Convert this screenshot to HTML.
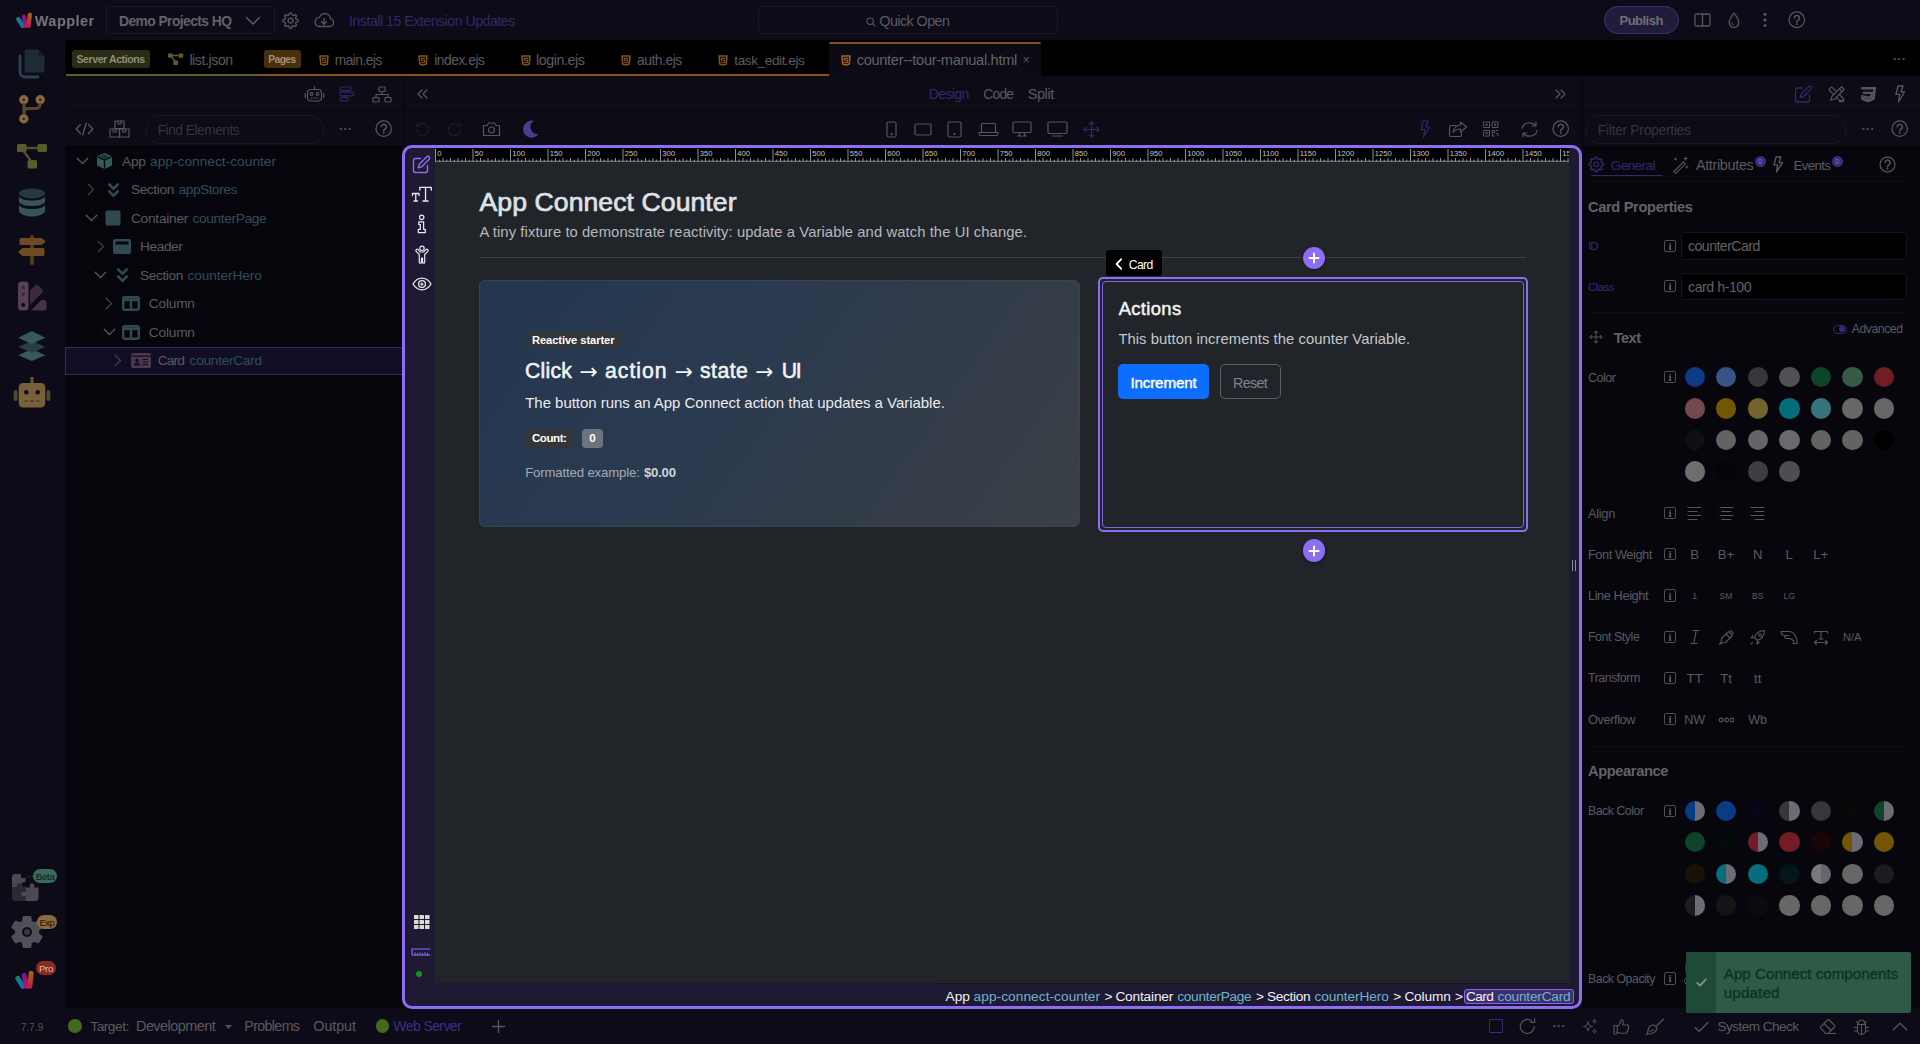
<!DOCTYPE html>
<html lang="en">
<head>
<meta charset="utf-8">
<title>Wappler - counter--tour-manual.html</title>
<style>
*{box-sizing:border-box;margin:0;padding:0}
html,body{width:1920px;height:1044px;overflow:hidden;background:#0d0b17;font-family:"Liberation Sans",sans-serif;color:#6e6d73;font-size:14px}
.abs{position:absolute}
.t{position:absolute;white-space:nowrap;line-height:1}
svg{position:absolute;overflow:visible}
.ic{fill:none;stroke:#66656c;stroke-width:1.4;stroke-linecap:round;stroke-linejoin:round}
.bg{position:absolute}
.layer{position:absolute;left:0;top:0;width:0;height:0}
/* SECTION-CSS */
</style>
</head>
<body>
<div class="bg" style="left:0;top:0;width:1920px;height:40px;background:#0d0b17"></div>
<div class="bg" style="left:0;top:40px;width:65.300px;height:968px;background:#0d0b17"></div>
<div class="bg" style="left:65.300px;top:40px;width:1854.700px;height:36px;background:#000"></div>
<div class="bg" style="left:65.300px;top:76px;width:337.700px;height:932px;background:#06050c"></div>
<div class="bg" style="left:1582px;top:76px;width:338px;height:932px;background:#07060d"></div>
<div class="bg" style="left:0;top:1008px;width:1920px;height:36px;background:#0d0b17"></div>
<div class="layer" id="topbar">
<svg class="" style="left:14.6px;top:11.7px;" width="17.5" height="16.5" viewBox="0 0 17.500 16.500"><defs><linearGradient id="wa1" gradientUnits="userSpaceOnUse" x1="3" y1="5" x2="7" y2="15"><stop offset="0" stop-color="#14907c"/><stop offset="1" stop-color="#1b6fc0"/></linearGradient><linearGradient id="wb1" gradientUnits="userSpaceOnUse" x1="8" y1="3" x2="11" y2="15"><stop offset="0" stop-color="#7d169c"/><stop offset="1" stop-color="#c8186c"/></linearGradient><linearGradient id="wc1" gradientUnits="userSpaceOnUse" x1="14.500" y1="1" x2="14" y2="15"><stop offset="0" stop-color="#b8700c"/><stop offset="1" stop-color="#cc1c50"/></linearGradient></defs><g fill="none" stroke-linecap="round" stroke-width="4.300" opacity=".92"><path d="M3.300 7.200L7.600 14" stroke="url(#wa1)"/><path d="M8.700 4.500L10.900 13.900" stroke="url(#wb1)"/><path d="M14.800 2.800L13.700 13.900" stroke="url(#wc1)"/></g></svg>
<span class="t" style="left:34.8px;top:14px;font-size:14.4px;color:#737277;letter-spacing:0.522px;font-weight:bold;">Wappler</span>
<div class="abs" style="left:106.0px;top:6.0px;width:168.5px;height:28.0px;border:1px solid #1b1925;border-radius:3px"></div>
<span class="t" style="left:119.0px;top:15px;font-size:13.85px;color:#636267;letter-spacing:-0.574px;font-weight:bold;">Demo Projects HQ</span>
<svg class="ic" style="left:244.5px;top:15.5px;stroke:#636267;stroke-width:1.3;" width="16" height="10" viewBox="0 0 16 10"><path d="M1.5 1.5 L8 8 L14.5 1.5"/></svg>
<svg class="ic" style="left:282.4px;top:11.7px;stroke:#57565c;stroke-width:1.3;" width="17.2" height="17.2" viewBox="0 0 17.2 17.2"><path d="M16.12 7.53 L16.12 9.67 L14.19 10.04 L13.57 11.54 L14.68 13.16 L13.16 14.68 L11.54 13.57 L10.04 14.19 L9.67 16.12 L7.53 16.12 L7.16 14.19 L5.66 13.57 L4.04 14.68 L2.52 13.16 L3.63 11.54 L3.01 10.04 L1.08 9.67 L1.08 7.53 L3.01 7.16 L3.63 5.66 L2.52 4.04 L4.04 2.52 L5.66 3.63 L7.16 3.01 L7.53 1.08 L9.67 1.08 L10.04 3.01 L11.54 3.63 L13.16 2.52 L14.68 4.04 L13.57 5.66 L14.19 7.16Z" stroke-linejoin="round"/><circle cx="8.6" cy="8.6" r="2.51"/></svg>
<svg class="ic" style="left:313.0px;top:12.0px;stroke:#57565c;stroke-width:1.3;" width="22" height="16" viewBox="0 0 22 16"><path d="M5.5 14.5h11a4 4 0 0 0 .9-7.9A5.6 5.6 0 0 0 6.6 5.3 4.7 4.7 0 0 0 5.5 14.5z"/><path d="M11 6.5v5.5M8.6 9.8L11 12.2l2.4-2.4"/></svg>
<span class="t" style="left:349.0px;top:14px;font-size:14.1px;color:#312a68;letter-spacing:-0.459px;">Install 15 Extension Updates</span>
<div class="abs" style="left:758.3px;top:6.0px;width:299.4px;height:28.0px;border:1px solid #1a1824;border-radius:3px"></div>
<svg class="ic" style="left:866.0px;top:16.5px;stroke:#57565c;stroke-width:1.1;" width="10" height="10" viewBox="0 0 10 10"><circle cx="4.2" cy="4.2" r="3.2"/><path d="M6.6 6.6L9.2 9.2"/></svg>
<span class="t" style="left:879.3px;top:14px;font-size:14.4px;color:#5b5a60;letter-spacing:-0.592px;">Quick Open</span>
<div class="abs" style="left:1603.7px;top:6.4px;width:75.5px;height:27.8px;background:#221c3c;border:1.2px solid #3e3270;border-radius:14px"></div>
<span class="t" style="left:1619.5px;top:14px;font-size:13.05px;color:#706f75;letter-spacing:-0.539px;font-weight:bold;">Publish</span>
<svg class="ic" style="left:1693.8px;top:13.0px;stroke:#57565c;stroke-width:1.3;" width="17" height="14" viewBox="0 0 17 14"><rect x="1" y="1" width="15" height="12" rx="1.5"/><path d="M8.5 1v12"/></svg>
<svg class="ic" style="left:1727.8px;top:11.5px;stroke:#57565c;stroke-width:1.3;" width="12" height="17" viewBox="0 0 12 17"><path d="M6 1.2C6 1.2 1.2 7.2 1.2 10.6a4.8 4.8 0 0 0 9.6 0C10.8 7.2 6 1.2 6 1.2z"/><path d="M3.6 10.8a2.4 2.4 0 0 0 1.7 2.2" stroke-width="1"/></svg>
<svg class="ic" style="left:1763.3px;top:12.0px;stroke:#57565c;stroke-width:0;" width="4" height="16" viewBox="0 0 4 16"><circle cx="2" cy="2.400" r="1.450" fill="#5c5b61"/><circle cx="2" cy="8" r="1.450" fill="#5c5b61"/><circle cx="2" cy="13.600" r="1.450" fill="#5c5b61"/></svg>
<svg class="ic" style="left:1787.8px;top:11.2px;stroke:#57565c;stroke-width:1.25;" width="17.6" height="17.6" viewBox="0 0 17.6 17.6"><circle cx="8.8" cy="8.8" r="7.8"/><path d="M6.30 6.90a2.600 2.500 0 1 1 3.900 2.200c-1 .600-1.400 1-1.400 2.100" stroke-width="1.500"/><circle cx="8.8" cy="13.10" r="0.950" fill="#57565c" stroke="none"/></svg>
</div>
<div class="layer" id="sidebar">
<svg class="" style="left:18.3px;top:48.3px;" width="28" height="32" viewBox="0 0 28 32"><path d="M2 8v16a5 5 0 0 0 5 5h13" fill="none" stroke="#294450" stroke-width="2.800" stroke-linecap="round"/><path d="M9 1.5h11l6.5 6.5v14a2.5 2.5 0 0 1-2.5 2.5H9A2.5 2.5 0 0 1 6.5 22V4A2.5 2.5 0 0 1 9 1.5z" fill="#1f2b38"/><path d="M20 1.5v4.5a2 2 0 0 0 2 2h4.5z" fill="#161f2a"/></svg>
<svg class="" style="left:18.0px;top:94.0px;" width="28" height="30" viewBox="0 0 28 30"><g fill="none" stroke="#86683e" stroke-width="3.600"><circle cx="5.800" cy="5.800" r="2.900"/><circle cx="22.200" cy="5.800" r="2.900"/><circle cx="5.800" cy="24.800" r="2.900"/></g><path d="M6 9v12M22 9v1.5a4 4 0 0 1-4 4h-8a4 4 0 0 0-4 4" fill="none" stroke="#594630" stroke-width="3.200"/></svg>
<svg class="" style="left:17.0px;top:143.0px;" width="30" height="26" viewBox="0 0 30 26"><g fill="#5a5c2e"><rect x="0" y="1" width="9.5" height="8" rx="1.6"/><rect x="20.5" y="1" width="9.5" height="8" rx="1.6"/><rect x="10.5" y="17" width="9.5" height="8.5" rx="1.6"/></g><path d="M9 5h12M6.5 8l7.5 10" stroke="#505130" stroke-width="2.300" fill="none"/></svg>
<svg class="" style="left:18.0px;top:188.0px;" width="28" height="30" viewBox="0 0 28 30"><ellipse cx="14" cy="5.500" rx="13" ry="5" fill="#26393c"/><path d="M1 8.5c2 3 7 4 13 4s11-1 13-4v5.5c-2 3-7 4-13 4s-11-1-13-4z" fill="#36555a"/><path d="M1 17c2 3 7 4 13 4s11-1 13-4v6c-1 3.5-7 5.5-13 5.5S2 26.500 1 23z" fill="#36555a"/></svg>
<svg class="" style="left:17.0px;top:234.5px;" width="30" height="30" viewBox="0 0 30 30"><rect x="13.2" y="0" width="3.6" height="30" rx="1.6" fill="#5a3e1e"/><path d="M4 3h20.500l4.5 3.500-4.500 3.500H4a1.500 1.500 0 0 1-1.500-1.500v-4A1.500 1.500 0 0 1 4 3z" fill="#6e4b24"/><path d="M26 13H5.500L1 17 5.500 21H26a1.500 1.500 0 0 0 1.500-1.500v-5A1.500 1.500 0 0 0 26 13z" fill="#6e4b24"/></svg>
<svg class="" style="left:17.0px;top:281.0px;" width="30" height="30" viewBox="0 0 30 30"><rect x="1" y="0.5" width="10.5" height="29" rx="3.5" fill="#574058"/><circle cx="6.2" cy="24" r="2" fill="#0e0c18"/><rect x="4.6" y="5" width="3.2" height="3.2" fill="#3c2838"/><rect x="4.6" y="11.500" width="3.2" height="3.2" fill="#3c2838"/><path d="M13 9.500l5-5a2.500 2.500 0 0 1 3.500 0l3.800 3.800a2.500 2.500 0 0 1 0 3.500L13 24z" fill="#3a2a3a"/><path d="M14 29.500L24.500 19H27a2.500 2.500 0 0 1 2.500 2.500V27a2.500 2.500 0 0 1-2.500 2.500z" fill="#4a3148"/></svg>
<svg class="" style="left:16.2px;top:329.5px;" width="31.5" height="32" viewBox="0 0 30 33"><path d="M15 19.500L1 26l14 6 14-6z" fill="#38595a"/><path d="M15 11L1 17.500l14 6 14-6z" fill="#263f40"/><path d="M15 1L1 8l14 6.500L29 8z" fill="#38595a"/></svg>
<svg class="" style="left:13.0px;top:376.5px;" width="38" height="32" viewBox="0 0 38 32"><rect x="17.700" y="0" width="2.600" height="6.500" fill="#6a5434"/><circle cx="19" cy="1.600" r="1.600" fill="#6a5434"/><rect x="0.700" y="13" width="3.800" height="11" rx="1.900" fill="#574630"/><rect x="33.500" y="13" width="3.800" height="11" rx="1.900" fill="#574630"/><rect x="5.700" y="6" width="26.600" height="24.500" rx="4.500" fill="#77603a"/><circle cx="13.300" cy="15.300" r="2.300" fill="#0e0c18"/><circle cx="24.700" cy="15.300" r="2.300" fill="#0e0c18"/><path d="M11.500 24h3.500M17.200 24h3.600M23 24h3.500" stroke="#564430" stroke-width="1.800"/></svg>
<svg class="" style="left:11.8px;top:874.1px;" width="26.5" height="27" viewBox="0 0 26.500 27"><path d="M0 3a3 3 0 0 1 3-3h6.200c-1 2.800.300 4.200 2 4.200s3-1.400 2-4.200H13.500v8.500c-2.800-1-4.200.300-4.200 2s1.400 3 4.200 2V13.500H0z" fill="#4b4a50"/><path d="M0 13.500h5c-1-2.800.300-4.200 2-4.200s3 1.400 2 4.200h4.500v4.500c2.800-1 4.200.300 4.200 2s-1.400 3-4.200 2V27H3a3 3 0 0 1-3-3z" fill="#2b2a31"/><path d="M13.500 27v-5c-2.800 1-4.200-.300-4.200-2s1.400-3 4.200-2v-4.500H18c-1-2.800.300-4.200 2-4.200s3 1.400 2 4.200h4.500V24a3 3 0 0 1-3 3z" fill="#4b4a50" transform="translate(0 0)"/><path d="M16 2.500h7.500v7" fill="none" stroke="#2f2e35" stroke-width="1.600" stroke-dasharray="1.800 1.800"/></svg>
<div class="abs" style="left:32.9px;top:868.5px;width:24.5px;height:14.2px;background:#3a6a5c;border-radius:7px"></div>
<span class="t" style="left:35.7px;top:872px;font-size:9.8px;color:#0c1d18;letter-spacing:-0.286px;">Beta</span>
<svg class="" style="left:11.9px;top:917.2px;" width="30" height="30" viewBox="0 0 30 30"><path d="M17.93 29.51 L12.07 29.51 L11.66 25.27 L7.77 23.03 L3.90 24.79 L0.97 19.72 L4.44 17.25 L4.44 12.75 L0.97 10.28 L3.90 5.21 L7.77 6.97 L11.66 4.73 L12.07 0.49 L17.93 0.49 L18.34 4.73 L22.23 6.97 L26.10 5.21 L29.03 10.28 L25.56 12.75 L25.56 17.25 L29.03 19.72 L26.10 24.79 L22.23 23.03 L18.34 25.27Z" fill="#515056" stroke="#515056" stroke-width="3" stroke-linejoin="round"/><circle cx="15" cy="15" r="5" fill="#0e0c18"/><circle cx="15" cy="15" r="3" fill="#3b3a40"/></svg>
<div class="abs" style="left:36.8px;top:914.5px;width:20.6px;height:14.2px;background:#8a6a3f;border-radius:7px"></div>
<span class="t" style="left:39.6px;top:919px;font-size:9.35px;color:#1c150b;letter-spacing:-0.555px;">Exp</span>
<svg class="" style="left:13.5px;top:969.6px;" width="20.3" height="19.4" viewBox="0 0 17.500 16.500"><defs><linearGradient id="wa2" gradientUnits="userSpaceOnUse" x1="3" y1="5" x2="7" y2="15"><stop offset="0" stop-color="#14907c"/><stop offset="1" stop-color="#1b6fc0"/></linearGradient><linearGradient id="wb2" gradientUnits="userSpaceOnUse" x1="8" y1="3" x2="11" y2="15"><stop offset="0" stop-color="#7d169c"/><stop offset="1" stop-color="#c8186c"/></linearGradient><linearGradient id="wc2" gradientUnits="userSpaceOnUse" x1="14.500" y1="1" x2="14" y2="15"><stop offset="0" stop-color="#b8700c"/><stop offset="1" stop-color="#cc1c50"/></linearGradient></defs><g fill="none" stroke-linecap="round" stroke-width="4.300" opacity=".92"><path d="M3.300 7.200L7.600 14" stroke="url(#wa2)"/><path d="M8.700 4.500L10.900 13.900" stroke="url(#wb2)"/><path d="M14.800 2.800L13.700 13.900" stroke="url(#wc2)"/></g></svg>
<div class="abs" style="left:36.1px;top:961.3px;width:20.0px;height:14.2px;background:#8a2a22;border-radius:7px"></div>
<span class="t" style="left:38.9px;top:964px;font-size:9.8px;color:#d6b8b2;letter-spacing:-0.375px;">Pro</span>
</div>
<div class="layer" id="tabbar">
<div class="abs" style="left:66.0px;top:74.2px;width:191.0px;height:1.8px;background:#55602f"></div>
<div class="abs" style="left:257.0px;top:74.2px;width:572.5px;height:1.8px;background:#8a4f1f"></div>
<div class="abs" style="left:72.2px;top:49.8px;width:77.6px;height:18.2px;background:#2a2c17;border-radius:3px"></div>
<span class="t" style="left:76.4px;top:54px;font-size:10.55px;color:#8d8f74;letter-spacing:-0.406px;font-weight:bold;">Server Actions</span>
<svg class="" style="left:168.0px;top:53.3px;" width="15.2" height="12.35" viewBox="0 0 16 13"><g fill="#5a5c2a" stroke="none"><rect x="0" y="0.5" width="5" height="4.4" rx="0.8"/><rect x="11" y="0.5" width="5" height="4.4" rx="0.8"/><rect x="5.6" y="8" width="5" height="4.6" rx="0.8"/></g><path d="M5 2.7h6M3.6 3.6L7.6 9" stroke="#5a5c2a" stroke-width="1.5" fill="none"/></svg>
<span class="t" style="left:189.4px;top:53px;font-size:14.1px;color:#5b5a60;letter-spacing:-0.402px;">list.json</span>
<div class="abs" style="left:263.9px;top:49.8px;width:36.7px;height:18.2px;background:#48300f;border-radius:3px"></div>
<span class="t" style="left:268.3px;top:55px;font-size:10.2px;color:#a48e72;letter-spacing:-0.537px;font-weight:bold;">Pages</span>
<svg class="ic" style="left:318.5px;top:54.6px;stroke:#85551d;stroke-width:1.5;" width="10" height="11" viewBox="0 0 10 11"><path d="M1 .900h8l-.750 8.100L5 10.100 1.750 9z" stroke-width="1.500"/><path d="M6.900 3.400H3.200l.150 1.900H6.700l-.200 2L5 7.800l-1.500-.500" stroke-width="1.100"/></svg>
<span class="t" style="left:334.7px;top:54px;font-size:13.75px;color:#5b5a60;letter-spacing:-0.500px;">main.ejs</span>
<svg class="ic" style="left:418.3px;top:54.6px;stroke:#85551d;stroke-width:1.5;" width="10" height="11" viewBox="0 0 10 11"><path d="M1 .900h8l-.750 8.100L5 10.100 1.750 9z" stroke-width="1.500"/><path d="M6.900 3.400H3.200l.150 1.900H6.700l-.200 2L5 7.800l-1.500-.500" stroke-width="1.100"/></svg>
<span class="t" style="left:434.2px;top:54px;font-size:13.85px;color:#5b5a60;letter-spacing:-0.484px;">index.ejs</span>
<svg class="ic" style="left:520.6px;top:54.6px;stroke:#85551d;stroke-width:1.5;" width="10" height="11" viewBox="0 0 10 11"><path d="M1 .900h8l-.750 8.100L5 10.100 1.750 9z" stroke-width="1.500"/><path d="M6.900 3.400H3.200l.150 1.900H6.700l-.200 2L5 7.800l-1.500-.500" stroke-width="1.100"/></svg>
<span class="t" style="left:536.0px;top:53px;font-size:14.35px;color:#5b5a60;letter-spacing:-0.456px;">login.ejs</span>
<svg class="ic" style="left:621.0px;top:54.6px;stroke:#85551d;stroke-width:1.5;" width="10" height="11" viewBox="0 0 10 11"><path d="M1 .900h8l-.750 8.100L5 10.100 1.750 9z" stroke-width="1.500"/><path d="M6.900 3.400H3.200l.150 1.900H6.700l-.200 2L5 7.800l-1.500-.500" stroke-width="1.100"/></svg>
<span class="t" style="left:637.0px;top:54px;font-size:13.9px;color:#5b5a60;letter-spacing:-0.483px;">auth.ejs</span>
<svg class="ic" style="left:718.3px;top:54.6px;stroke:#85551d;stroke-width:1.5;" width="10" height="11" viewBox="0 0 10 11"><path d="M1 .900h8l-.750 8.100L5 10.100 1.750 9z" stroke-width="1.500"/><path d="M6.900 3.400H3.200l.150 1.900H6.700l-.200 2L5 7.800l-1.500-.500" stroke-width="1.100"/></svg>
<span class="t" style="left:734.3px;top:54px;font-size:13.65px;color:#5b5a60;letter-spacing:-0.432px;">task_edit.ejs</span>
<div class="abs" style="left:829.3px;top:42.0px;width:211.7px;height:34.0px;background:#0b0a15;border-top:2px solid #8a4f1f;border-radius:2px 2px 0 0"></div>
<svg class="ic" style="left:840.7px;top:54.6px;stroke:#a8651f;stroke-width:1.5;" width="10" height="11" viewBox="0 0 10 11"><path d="M1 .900h8l-.750 8.100L5 10.100 1.750 9z" stroke-width="1.500"/><path d="M6.900 3.400H3.200l.150 1.900H6.700l-.200 2L5 7.800l-1.500-.500" stroke-width="1.100"/></svg>
<span class="t" style="left:856.7px;top:53px;font-size:14.6px;color:#636267;letter-spacing:-0.306px;">counter--tour-manual.html</span>
<span class="t" style="left:1022.4px;top:54px;font-size:12.5px;color:#57565c;">×</span>
<span class="t" style="left:1893.0px;top:52px;font-size:13.0px;color:#504f56;font-weight:bold;">···</span>
</div>
<div class="layer" id="leftpanel">
<div class="abs" style="left:65.3px;top:76.0px;width:337.7px;height:35.0px;background:#0c0b16;border-bottom:1px solid #07060d"></div>
<div class="abs" style="left:65.3px;top:111.0px;width:337.7px;height:35.0px;background:#0c0b16;border-bottom:1px solid #08070e"></div>
<svg class="ic" style="left:304.2px;top:85.0px;stroke:#57565c;stroke-width:1.2;" width="21" height="18" viewBox="0 0 21 18"><rect x="3.500" y="4.500" width="14" height="11.500" rx="3.500"/><path d="M10.500 4.500V1.500M1.200 8.500v4M19.800 8.500v4M7 13h1.200M9.900 13h1.200M12.800 13H14"/><circle cx="7.500" cy="9" r="1.300"/><circle cx="13.500" cy="9" r="1.300"/></svg>
<svg class="ic" style="left:339.2px;top:86.0px;stroke:#312a68;stroke-width:1.2;" width="16" height="16" viewBox="0 0 16 16"><rect x="1" y="1" width="11" height="3.600" rx="1.800"/><rect x="1" y="6.200" width="14" height="3.600" rx="1.800"/><rect x="1" y="11.400" width="8" height="3.600" rx="1.800"/></svg>
<svg class="ic" style="left:371.6px;top:85.5px;stroke:#57565c;stroke-width:1.2;" width="20" height="17" viewBox="0 0 20 17"><rect x="7" y="1" width="6" height="4.500" rx="0.800"/><rect x="1" y="11.500" width="6" height="4.500" rx="0.800"/><rect x="13" y="11.500" width="6" height="4.500" rx="0.800"/><path d="M10 5.500v3M4 11.500v-3h12v3"/></svg>
<svg class="ic" style="left:75.2px;top:122.0px;stroke:#57565c;stroke-width:1.3;" width="19" height="14" viewBox="0 0 19 14"><path d="M5.500 2.500L1.200 7l4.300 4.500M13.500 2.500L17.800 7l-4.300 4.500M11.300 1L7.700 13"/></svg>
<svg class="ic" style="left:108.5px;top:120.0px;stroke:#57565c;stroke-width:1.2;" width="21" height="18" viewBox="0 0 21 18"><rect x="6" y="1" width="9" height="7.500"/><rect x="1" y="9" width="9.500" height="8"/><rect x="10.500" y="9" width="9.500" height="8"/><path d="M9 1v3h3V1M4.200 9v3h3V9M13.700 9v3h3V9"/></svg>
<div class="abs" style="left:144.6px;top:114.8px;width:179.2px;height:28.8px;border:1px solid #1a1825;border-radius:15px;background:#0c0b16"></div>
<span class="t" style="left:157.7px;top:124px;font-size:13.8px;color:#35343c;letter-spacing:-0.518px;">Find Elements</span>
<span class="t" style="left:339.0px;top:122px;font-size:13.0px;color:#504f56;font-weight:bold;">···</span>
<svg class="ic" style="left:375.0px;top:120.3px;stroke:#57565c;stroke-width:1.25;" width="17.4" height="17.4" viewBox="0 0 17.4 17.4"><circle cx="8.7" cy="8.7" r="7.7"/><path d="M6.20 6.80a2.600 2.500 0 1 1 3.900 2.200c-1 .600-1.400 1-1.400 2.100" stroke-width="1.500"/><circle cx="8.7" cy="13.00" r="0.950" fill="#57565c" stroke="none"/></svg>
<div class="abs" style="left:65.3px;top:346.5px;width:337.7px;height:28.3px;background:#100d24;border:1px solid #33296c"></div>
<svg class="ic" style="left:76.1px;top:157.0px;stroke:#57565c;stroke-width:1.3;" width="13" height="8" viewBox="0 0 13 8"><path d="M1.200 1.200L6.500 6.500 11.800 1.200"/></svg>
<svg class="" style="left:95.5px;top:152.0px;" width="17" height="18" viewBox="0 0 17 18"><path d="M8.500 1L1 4.500v9L8.500 17l7.500-3.500v-9z" fill="#2f5d5a"/><path d="M1.500 4.800L8.500 8l7-3.200M8.500 8v8.500" stroke="#06050c" stroke-width="1.300" fill="none"/><path d="M8.500 2.500L4 4.600 8.500 6.700 13 4.600z" fill="#06050c" opacity=".55"/></svg>
<span class="t" style="left:122.0px;top:155px;font-size:13.7px;color:#5b5a60;letter-spacing:-0.190px;">App</span>
<span class="t" style="left:150.0px;top:155px;font-size:13.7px;color:#2e4f5a;letter-spacing:0.029px;">app-connect-counter</span>
<svg class="ic" style="left:87.0px;top:183.1px;stroke:#403f46;stroke-width:1.3;" width="8" height="13" viewBox="0 0 8 13"><path d="M1.200 1.200L6.500 6.500 1.200 11.800"/></svg>
<svg class="" style="left:106.9px;top:181.6px;" width="13" height="16" viewBox="0 0 13 16"><path d="M1.500 1.800L6.500 6.600l5-4.800M1.500 8.800L6.500 13.600l5-4.800" fill="none" stroke="#314a52" stroke-width="2.600" stroke-linejoin="miter"/></svg>
<span class="t" style="left:130.9px;top:183px;font-size:13.7px;color:#5b5a60;letter-spacing:-0.383px;">Section</span>
<span class="t" style="left:178.6px;top:183px;font-size:13.7px;color:#2e4f5a;letter-spacing:-0.470px;">appStores</span>
<svg class="ic" style="left:84.5px;top:214.0px;stroke:#57565c;stroke-width:1.3;" width="13" height="8" viewBox="0 0 13 8"><path d="M1.200 1.200L6.500 6.500 11.800 1.200"/></svg>
<svg class="" style="left:105.4px;top:210.0px;" width="16" height="16" viewBox="0 0 16 16"><rect x="0.500" y="0.500" width="15" height="15" rx="1.800" fill="#314a52"/></svg>
<span class="t" style="left:130.9px;top:212px;font-size:13.7px;color:#5b5a60;letter-spacing:-0.226px;">Container</span>
<span class="t" style="left:192.5px;top:212px;font-size:13.7px;color:#2e4f5a;letter-spacing:-0.340px;">counterPage</span>
<svg class="ic" style="left:96.6px;top:240.2px;stroke:#403f46;stroke-width:1.3;" width="8" height="13" viewBox="0 0 8 13"><path d="M1.200 1.200L6.500 6.500 1.200 11.800"/></svg>
<svg class="" style="left:113.0px;top:239.2px;" width="18" height="15" viewBox="0 0 18 15"><rect x="0" y="0" width="18" height="15" rx="2" fill="#314a52"/><rect x="2.500" y="2.500" width="13" height="3" fill="#06050c"/></svg>
<span class="t" style="left:140.0px;top:240px;font-size:13.7px;color:#5b5a60;letter-spacing:-0.408px;">Header</span>
<svg class="ic" style="left:94.1px;top:271.0px;stroke:#57565c;stroke-width:1.3;" width="13" height="8" viewBox="0 0 13 8"><path d="M1.200 1.200L6.500 6.500 11.800 1.200"/></svg>
<svg class="" style="left:115.5px;top:267.0px;" width="13" height="16" viewBox="0 0 13 16"><path d="M1.500 1.800L6.500 6.600l5-4.800M1.500 8.800L6.500 13.600l5-4.800" fill="none" stroke="#314a52" stroke-width="2.600" stroke-linejoin="miter"/></svg>
<span class="t" style="left:140.0px;top:269px;font-size:13.7px;color:#5b5a60;letter-spacing:-0.383px;">Section</span>
<span class="t" style="left:187.4px;top:269px;font-size:13.7px;color:#2e4f5a;letter-spacing:-0.080px;">counterHero</span>
<svg class="ic" style="left:105.4px;top:297.2px;stroke:#403f46;stroke-width:1.3;" width="8" height="13" viewBox="0 0 8 13"><path d="M1.200 1.200L6.500 6.500 1.200 11.800"/></svg>
<svg class="" style="left:122.0px;top:296.2px;" width="18" height="15" viewBox="0 0 18 15"><rect x="1.200" y="1.200" width="15.600" height="12.600" rx="1.500" fill="none" stroke="#314a52" stroke-width="2.400"/><path d="M1 3.800h16" stroke="#314a52" stroke-width="2.800"/><path d="M9 3v11" stroke="#314a52" stroke-width="2.400"/></svg>
<span class="t" style="left:148.8px;top:297px;font-size:13.7px;color:#5b5a60;letter-spacing:-0.202px;">Column</span>
<svg class="ic" style="left:102.9px;top:328.0px;stroke:#57565c;stroke-width:1.3;" width="13" height="8" viewBox="0 0 13 8"><path d="M1.200 1.200L6.500 6.500 11.800 1.200"/></svg>
<svg class="" style="left:122.0px;top:324.5px;" width="18" height="15" viewBox="0 0 18 15"><rect x="1.200" y="1.200" width="15.600" height="12.600" rx="1.500" fill="none" stroke="#314a52" stroke-width="2.400"/><path d="M1 3.800h16" stroke="#314a52" stroke-width="2.800"/><path d="M9 3v11" stroke="#314a52" stroke-width="2.400"/></svg>
<span class="t" style="left:148.8px;top:326px;font-size:13.7px;color:#5b5a60;letter-spacing:-0.202px;">Column</span>
<svg class="ic" style="left:114.0px;top:354.2px;stroke:#403f46;stroke-width:1.3;" width="8" height="13" viewBox="0 0 8 13"><path d="M1.200 1.200L6.500 6.500 1.200 11.800"/></svg>
<svg class="" style="left:130.5px;top:353.2px;" width="20" height="15" viewBox="0 0 20 15"><rect x="0" y="0" width="20" height="15" rx="2" fill="#4d374d"/><rect x="0" y="2.500" width="20" height="1.200" fill="#100d24"/><circle cx="6" cy="7.500" r="1.700" fill="#100d24"/><path d="M3 12.500a3 3 0 0 1 6 0z" fill="#100d24"/><path d="M11.500 6.500h5.500M11.500 9h5.500M11.500 11.500h5.500" stroke="#100d24" stroke-width="1.100"/></svg>
<span class="t" style="left:157.7px;top:354px;font-size:13.7px;color:#5b5a60;letter-spacing:-0.799px;">Card</span>
<span class="t" style="left:189.6px;top:354px;font-size:13.7px;color:#2e4f5a;letter-spacing:-0.270px;">counterCard</span>
</div>
<div class="layer" id="rightpanel">
<div class="abs" style="left:1582.0px;top:76.0px;width:338.0px;height:35.0px;background:#0c0b16;border-bottom:1px solid #07060d"></div>
<div class="abs" style="left:1582.0px;top:111.0px;width:338.0px;height:35.0px;background:#0c0b16;border-bottom:1px solid #08070e"></div>
<div class="abs" style="left:1581.5px;top:76.0px;width:1.0px;height:70.0px;background:#06050b"></div>
<svg class="ic" style="left:1794.4px;top:85.0px;stroke:#312a68;stroke-width:1.300" width="19" height="18" viewBox="0 0 19 18"><path d="M8.500 3H3.500A2 2 0 0 0 1.500 5v10a2 2 0 0 0 2 2h10a2 2 0 0 0 2-2v-5"/><path d="M14.800 1.600a1.700 1.700 0 0 1 2.400 2.400L9.500 11.700l-3.200.800.800-3.200z"/></svg>
<svg class="ic" style="left:1827.1px;top:84.5px;stroke:#57565c;stroke-width:1.2;" width="19" height="19" viewBox="0 0 19 19"><g transform="rotate(45 9.500 9.500)"><path d="M7.600 0.500h3.800v13.500l-1.900 3.500-1.900-3.500z"/><path d="M7.600 3.500h3.800"/></g><g transform="rotate(-45 9.500 9.500)"><path d="M7.500 6.800V1.500a1 1 0 0 1 1-1h2a1 1 0 0 1 1 1v5.300M11.500 12.200v5.300a1 1 0 0 1-1 1h-2a1 1 0 0 1-1-1v-5.300"/></g><path d="M12.500 16.500c1.200-1.400 2.800-1.400 4 0"/></svg>
<svg class="ic" style="left:1858.6px;top:85.5px;stroke:#57565c;stroke-width:2;" width="18" height="17" viewBox="0 0 18 17"><path d="M3.300 2.200h12.400l-1.300 10.600-5.400 2.200-5.400-2.200-.300-2.600" stroke-width="2.600" stroke-linejoin="miter"/><path d="M4.600 6.800h8.200l-.400 3.800-3.400 1.300-3.200-1.200" stroke-width="2.300" stroke-linejoin="miter"/></svg>
<svg class="ic" style="left:1893.8px;top:85.0px;stroke:#57565c;stroke-width:1.4;" width="12" height="18" viewBox="0 0 12 18"><path d="M4 1h5L7 7.0h3.500L4.500 17l1.200-7.6H2z"/></svg>
<div class="abs" style="left:1585.0px;top:114.8px;width:261.7px;height:28.8px;border:1px solid #1a1825;border-radius:15px;background:#0c0b16"></div>
<span class="t" style="left:1597.8px;top:123px;font-size:14.0px;color:#35343c;letter-spacing:-0.351px;">Filter Properties</span>
<span class="t" style="left:1861.5px;top:122px;font-size:13.0px;color:#504f56;font-weight:bold;">···</span>
<svg class="ic" style="left:1891.1px;top:120.3px;stroke:#57565c;stroke-width:1.25;" width="17.4" height="17.4" viewBox="0 0 17.4 17.4"><circle cx="8.7" cy="8.7" r="7.7"/><path d="M6.20 6.80a2.600 2.500 0 1 1 3.900 2.200c-1 .600-1.400 1-1.400 2.100" stroke-width="1.500"/><circle cx="8.7" cy="13.00" r="0.950" fill="#57565c" stroke="none"/></svg>
<svg class="ic" style="left:1587.7px;top:155.7px;stroke:#312a68;stroke-width:1.3;" width="16.6" height="16.6" viewBox="0 0 16.6 16.6"><path d="M15.53 7.27 L15.53 9.33 L13.67 9.68 L13.08 11.12 L14.14 12.68 L12.68 14.14 L11.12 13.08 L9.68 13.67 L9.33 15.53 L7.27 15.53 L6.92 13.67 L5.48 13.08 L3.92 14.14 L2.46 12.68 L3.52 11.12 L2.93 9.68 L1.07 9.33 L1.07 7.27 L2.93 6.92 L3.52 5.48 L2.46 3.92 L3.92 2.46 L5.48 3.52 L6.92 2.93 L7.27 1.07 L9.33 1.07 L9.68 2.93 L11.12 3.52 L12.68 2.46 L14.14 3.92 L13.08 5.48 L13.67 6.92Z" stroke-linejoin="round"/><circle cx="8.3" cy="8.3" r="2.41"/></svg>
<span class="t" style="left:1610.7px;top:159px;font-size:13.55px;color:#312a68;letter-spacing:-0.568px;">General</span>
<div class="abs" style="left:1590.7px;top:174.5px;width:72.3px;height:1.3px;background:#312a68"></div>
<svg class="ic" style="left:1671.5px;top:155.5px;stroke:#57565c;stroke-width:1.1;" width="17" height="17" viewBox="0 0 17 17"><path d="M2 15.500l9.500-9.500 1.800 1.800L3.800 17.300z"/><path d="M13.500 1v3M12 2.500h3M3.500 2v2M2.500 3h2M15 10v2M14 11h2"/></svg>
<span class="t" style="left:1695.9px;top:158px;font-size:14.4px;color:#5b5a60;letter-spacing:-0.324px;">Attributes</span>
<div class="abs" style="left:1754.5px;top:156.0px;width:11.0px;height:11.0px;background:#382e7e;border-radius:50%"></div>
<span class="t" style="left:1758.2px;top:159px;font-size:6.5px;color:#8a80c8;">0</span>
<svg class="ic" style="left:1772.0px;top:155.5px;stroke:#57565c;stroke-width:1.4;" width="12" height="17" viewBox="0 0 12 17"><path d="M4 1h5L7 6.6h3.500L4.500 16l1.200-7.1H2z"/></svg>
<span class="t" style="left:1793.4px;top:159px;font-size:13.2px;color:#5b5a60;letter-spacing:-0.549px;">Events</span>
<div class="abs" style="left:1831.5px;top:156.0px;width:11.0px;height:11.0px;background:#382e7e;border-radius:50%"></div>
<span class="t" style="left:1835.2px;top:159px;font-size:6.5px;color:#8a80c8;">0</span>
<svg class="ic" style="left:1879.1px;top:155.5px;stroke:#57565c;stroke-width:1.25;" width="17.0" height="17.0" viewBox="0 0 17.0 17.0"><circle cx="8.5" cy="8.5" r="7.5"/><path d="M6.00 6.60a2.600 2.500 0 1 1 3.900 2.200c-1 .600-1.400 1-1.400 2.100" stroke-width="1.500"/><circle cx="8.5" cy="12.80" r="0.950" fill="#57565c" stroke="none"/></svg>
<div class="abs" style="left:1588.0px;top:181.0px;width:318.0px;height:1.0px;background:#0f0e18"></div>
<span class="t" style="left:1588.0px;top:200px;font-size:14.6px;color:#636267;letter-spacing:-0.323px;font-weight:bold;">Card Properties</span>
<span class="t" style="left:1588.0px;top:241px;font-size:11.3px;color:#352d74;letter-spacing:-0.800px;">ID</span>
<div class="abs" style="left:1664.0px;top:239.5px;width:12.0px;height:12.3px;border:1.200px solid #504f56;border-radius:2px"></div><span class="t" style="left:1668.4px;top:242px;font-size:10.5px;color:#636267;font-weight:bold;font-family:'Liberation Serif',serif;">i</span>
<div class="abs" style="left:1681.0px;top:232.4px;width:226.0px;height:27.3px;background:#000;border:1px solid #15141c;border-radius:3px"></div>
<span class="t" style="left:1688.0px;top:239px;font-size:14.1px;color:#636267;letter-spacing:-0.529px;">counterCard</span>
<span class="t" style="left:1588.0px;top:282px;font-size:11.4px;color:#352d74;letter-spacing:-0.501px;">Class</span>
<div class="abs" style="left:1664.0px;top:280.0px;width:12.0px;height:12.3px;border:1.200px solid #504f56;border-radius:2px"></div><span class="t" style="left:1668.4px;top:282px;font-size:10.5px;color:#636267;font-weight:bold;font-family:'Liberation Serif',serif;">i</span>
<div class="abs" style="left:1681.0px;top:273.0px;width:226.0px;height:27.3px;background:#000;border:1px solid #15141c;border-radius:3px"></div>
<span class="t" style="left:1688.0px;top:280px;font-size:14.2px;color:#636267;letter-spacing:-0.466px;">card h-100</span>
<div class="abs" style="left:1588.0px;top:312.4px;width:318.0px;height:1.0px;background:#0f0e18"></div>
<div class="abs" style="left:1833.0px;top:324.5px;width:14.0px;height:9.3px;border:1.200px solid #352d74;border-radius:5px"></div>
<div class="abs" style="left:1838.8px;top:326.3px;width:6.0px;height:5.7px;background:#352d74;border-radius:3px"></div>
<span class="t" style="left:1851.7px;top:323px;font-size:12.2px;color:#5b5a60;letter-spacing:-0.423px;">Advanced</span>
<svg class="ic" style="left:1589.0px;top:330.0px;stroke:#55545b;stroke-width:1.0;" width="14" height="14" viewBox="0 0 14 14"><path d="M7 1v12M1 7h12M5.200 2.800L7 1l1.800 1.800M5.200 11.200L7 13l1.800-1.800M2.800 5.200L1 7l1.800 1.800M11.200 5.200L13 7l-1.800 1.800"/></svg>
<span class="t" style="left:1613.8px;top:331px;font-size:14.6px;color:#636267;letter-spacing:-0.578px;font-weight:bold;">Text</span>
<span class="t" style="left:1588.0px;top:372px;font-size:12.55px;color:#5b5a60;letter-spacing:-0.524px;">Color</span>
<div class="abs" style="left:1664.0px;top:370.7px;width:12.0px;height:12.3px;border:1.200px solid #504f56;border-radius:2px"></div><span class="t" style="left:1668.4px;top:373px;font-size:10.5px;color:#636267;font-weight:bold;font-family:'Liberation Serif',serif;">i</span>
<div class="abs" style="left:1684.6px;top:367.0px;width:20.4px;height:20.4px;background:#0b3b85;border-radius:50%"></div>
<div class="abs" style="left:1716.1px;top:367.0px;width:20.4px;height:20.4px;background:#375486;border-radius:50%"></div>
<div class="abs" style="left:1747.7px;top:367.0px;width:20.4px;height:20.4px;background:#36373b;border-radius:50%"></div>
<div class="abs" style="left:1779.2px;top:367.0px;width:20.4px;height:20.4px;background:#525255;border-radius:50%"></div>
<div class="abs" style="left:1810.7px;top:367.0px;width:20.4px;height:20.4px;background:#0e4529;border-radius:50%"></div>
<div class="abs" style="left:1842.2px;top:367.0px;width:20.4px;height:20.4px;background:#375a44;border-radius:50%"></div>
<div class="abs" style="left:1873.8px;top:367.0px;width:20.4px;height:20.4px;background:#721d25;border-radius:50%"></div>
<div class="abs" style="left:1684.6px;top:398.4px;width:20.4px;height:20.4px;background:#73494e;border-radius:50%"></div>
<div class="abs" style="left:1716.1px;top:398.4px;width:20.4px;height:20.4px;background:#725606;border-radius:50%"></div>
<div class="abs" style="left:1747.7px;top:398.4px;width:20.4px;height:20.4px;background:#736330;border-radius:50%"></div>
<div class="abs" style="left:1779.2px;top:398.4px;width:20.4px;height:20.4px;background:#066d7c;border-radius:50%"></div>
<div class="abs" style="left:1810.7px;top:398.4px;width:20.4px;height:20.4px;background:#38747e;border-radius:50%"></div>
<div class="abs" style="left:1842.2px;top:398.4px;width:20.4px;height:20.4px;background:#676767;border-radius:50%"></div>
<div class="abs" style="left:1873.8px;top:398.4px;width:20.4px;height:20.4px;background:#676767;border-radius:50%"></div>
<div class="abs" style="left:1684.6px;top:429.8px;width:20.4px;height:20.4px;background:#0f1013;border-radius:50%"></div>
<div class="abs" style="left:1716.1px;top:429.8px;width:20.4px;height:20.4px;background:#636364;border-radius:50%"></div>
<div class="abs" style="left:1747.7px;top:429.8px;width:20.4px;height:20.4px;background:#656567;border-radius:50%"></div>
<div class="abs" style="left:1779.2px;top:429.8px;width:20.4px;height:20.4px;background:#6a6a6c;border-radius:50%"></div>
<div class="abs" style="left:1810.7px;top:429.8px;width:20.4px;height:20.4px;background:#636364;border-radius:50%"></div>
<div class="abs" style="left:1842.2px;top:429.8px;width:20.4px;height:20.4px;background:#636364;border-radius:50%"></div>
<div class="abs" style="left:1873.8px;top:429.8px;width:20.4px;height:20.4px;background:#000000;border-radius:50%"></div>
<div class="abs" style="left:1684.6px;top:461.4px;width:20.4px;height:20.4px;background:#6e6e6e;border-radius:50%"></div>
<div class="abs" style="left:1716.1px;top:461.4px;width:20.4px;height:20.4px;background:#040406;border-radius:50%"></div>
<div class="abs" style="left:1747.7px;top:461.4px;width:20.4px;height:20.4px;background:#3e3e40;border-radius:50%"></div>
<div class="abs" style="left:1779.2px;top:461.4px;width:20.4px;height:20.4px;background:#4e4e50;border-radius:50%"></div>
<span class="t" style="left:1588.0px;top:508px;font-size:12.8px;color:#5b5a60;letter-spacing:-0.290px;">Align</span>
<div class="abs" style="left:1664.0px;top:507.0px;width:12.0px;height:12.3px;border:1.200px solid #504f56;border-radius:2px"></div><span class="t" style="left:1668.4px;top:509px;font-size:10.5px;color:#636267;font-weight:bold;font-family:'Liberation Serif',serif;">i</span>
<span class="t" style="left:1588.0px;top:549px;font-size:12.8px;color:#5b5a60;letter-spacing:-0.447px;">Font Weight</span>
<div class="abs" style="left:1664.0px;top:548.1px;width:12.0px;height:12.3px;border:1.200px solid #504f56;border-radius:2px"></div><span class="t" style="left:1668.4px;top:550px;font-size:10.5px;color:#636267;font-weight:bold;font-family:'Liberation Serif',serif;">i</span>
<span class="t" style="left:1588.0px;top:590px;font-size:12.8px;color:#5b5a60;letter-spacing:-0.425px;">Line Height</span>
<div class="abs" style="left:1664.0px;top:589.3px;width:12.0px;height:12.3px;border:1.200px solid #504f56;border-radius:2px"></div><span class="t" style="left:1668.4px;top:592px;font-size:10.5px;color:#636267;font-weight:bold;font-family:'Liberation Serif',serif;">i</span>
<span class="t" style="left:1588.0px;top:631px;font-size:12.35px;color:#5b5a60;letter-spacing:-0.422px;">Font Style</span>
<div class="abs" style="left:1664.0px;top:630.5px;width:12.0px;height:12.3px;border:1.200px solid #504f56;border-radius:2px"></div><span class="t" style="left:1668.4px;top:633px;font-size:10.5px;color:#636267;font-weight:bold;font-family:'Liberation Serif',serif;">i</span>
<span class="t" style="left:1588.0px;top:672px;font-size:12.45px;color:#5b5a60;letter-spacing:-0.496px;">Transform</span>
<div class="abs" style="left:1664.0px;top:671.7px;width:12.0px;height:12.3px;border:1.200px solid #504f56;border-radius:2px"></div><span class="t" style="left:1668.4px;top:674px;font-size:10.5px;color:#636267;font-weight:bold;font-family:'Liberation Serif',serif;">i</span>
<span class="t" style="left:1588.0px;top:714px;font-size:12.8px;color:#5b5a60;letter-spacing:-0.428px;">Overflow</span>
<div class="abs" style="left:1664.0px;top:712.9px;width:12.0px;height:12.3px;border:1.200px solid #504f56;border-radius:2px"></div><span class="t" style="left:1668.4px;top:715px;font-size:10.5px;color:#636267;font-weight:bold;font-family:'Liberation Serif',serif;">i</span>
<svg class="ic" style="left:1687.2px;top:506.0px;stroke:#57565c;stroke-width:1.1;" width="15" height="15" viewBox="0 0 15 15"><path d="M1 1.500h13M1 5.500h9M1 9.500h13M1 13.500h9"/></svg>
<svg class="ic" style="left:1718.6px;top:506.0px;stroke:#57565c;stroke-width:1.1;" width="15" height="15" viewBox="0 0 15 15"><path d="M1 1.500h13M3 5.500h9M1 9.500h13M3 13.500h9"/></svg>
<svg class="ic" style="left:1750.2px;top:506.0px;stroke:#57565c;stroke-width:1.1;" width="15" height="15" viewBox="0 0 15 15"><path d="M1 1.500h13M5 5.500h9M1 9.500h13M5 13.500h9"/></svg>
<span class="t" style="left:1690.3px;top:548px;font-size:13.2px;color:#5b5a60;">B</span>
<span class="t" style="left:1717.8px;top:548px;font-size:13.2px;color:#5b5a60;">B+</span>
<span class="t" style="left:1752.9px;top:548px;font-size:13.2px;color:#5b5a60;">N</span>
<span class="t" style="left:1785.6px;top:548px;font-size:13.2px;color:#5b5a60;">L</span>
<span class="t" style="left:1813.2px;top:548px;font-size:13.2px;color:#5b5a60;">L+</span>
<span class="t" style="left:1692.3px;top:592px;font-size:8.6px;color:#5b5a60;">1</span>
<span class="t" style="left:1719.6px;top:592px;font-size:8.6px;color:#5b5a60;">SM</span>
<span class="t" style="left:1752.0px;top:592px;font-size:8.6px;color:#5b5a60;">BS</span>
<span class="t" style="left:1783.6px;top:592px;font-size:8.6px;color:#5b5a60;">LG</span>
<svg class="ic" style="left:1689.7px;top:629.0px;stroke:#57565c;stroke-width:1.1;" width="10" height="16" viewBox="0 0 10 16"><path d="M3 1.500h6M1 14.500h6M6.200 1.500L3.800 14.500"/></svg>
<svg class="ic" style="left:1717.6px;top:628.5px;stroke:#57565c;stroke-width:1.1;" width="17" height="17" viewBox="0 0 17 17"><path d="M10.500 2.500l4 4-7 7-4.500.500.500-4.500z"/><path d="M3.500 13.500L1.500 15.500M12.500 1.500l3 3M8 5l4 4"/></svg>
<svg class="ic" style="left:1749.2px;top:628.5px;stroke:#57565c;stroke-width:1.1;" width="17" height="17" viewBox="0 0 17 17"><path d="M15.500 1.500c-5 0-8.500 3-10 7l3 3c4-1.500 7-5 7-10z"/><circle cx="11" cy="6" r="1.300"/><path d="M5.500 8.500L2 9l2-2.500M8.500 11.500L8 15l2.500-2M3.500 13.500l-1.500 1.500"/></svg>
<svg class="ic" style="left:1780.3px;top:629.5px;stroke:#57565c;stroke-width:1.1;" width="18" height="15" viewBox="0 0 18 15"><path d="M1 1.500h8c3 0 5 1.500 6.500 4.500l1.500 3.500v4h-3.500V10.500L10 8.500H6.500C4 8.500 4 5.500 6.500 5.500H9M1 1.500c0 3 1.500 4 4 4"/></svg>
<svg class="ic" style="left:1812.7px;top:629.5px;stroke:#57565c;stroke-width:1.1;" width="16" height="15" viewBox="0 0 16 15"><path d="M1.500 3V1.500h13V3M8 1.500v7.500M6 9h4M1.500 12.500h13M3.500 10.500l-2 2 2 2M12.500 10.500l2 2-2 2"/></svg>
<span class="t" style="left:1843.0px;top:632px;font-size:11.0px;color:#5b5a60;">N/A</span>
<span class="t" style="left:1686.6px;top:672px;font-size:13.2px;color:#5b5a60;">TT</span>
<span class="t" style="left:1720.2px;top:672px;font-size:13.2px;color:#5b5a60;">Tt</span>
<span class="t" style="left:1754.0px;top:672px;font-size:13.2px;color:#5b5a60;">tt</span>
<span class="t" style="left:1684.2px;top:714px;font-size:12.6px;color:#5b5a60;">NW</span>
<span class="t" style="left:1748.2px;top:714px;font-size:12.6px;color:#5b5a60;">Wb</span>
<svg class="ic" style="left:1717.6px;top:716.6px;stroke:#57565c;stroke-width:1.1;" width="17" height="6" viewBox="0 0 17 6"><circle cx="3" cy="3" r="1.900"/><circle cx="8.500" cy="3" r="1.900"/><circle cx="14" cy="3" r="1.900"/></svg>
<div class="abs" style="left:1588.0px;top:746.3px;width:318.0px;height:1.0px;background:#0f0e18"></div>
<span class="t" style="left:1588.0px;top:764px;font-size:14.6px;color:#636267;letter-spacing:-0.352px;font-weight:bold;">Appearance</span>
<span class="t" style="left:1588.0px;top:805px;font-size:12.3px;color:#5b5a60;letter-spacing:-0.462px;">Back Color</span>
<div class="abs" style="left:1664.0px;top:804.5px;width:12.0px;height:12.3px;border:1.200px solid #504f56;border-radius:2px"></div><span class="t" style="left:1668.4px;top:807px;font-size:10.5px;color:#636267;font-weight:bold;font-family:'Liberation Serif',serif;">i</span>
<div class="abs" style="left:1684.6px;top:800.6px;width:20.4px;height:20.4px;background:linear-gradient(90deg,#0b3b85 50%,#6c6c75 50%);border-radius:50%"></div>
<div class="abs" style="left:1716.1px;top:800.6px;width:20.4px;height:20.4px;background:#0b3b85;border-radius:50%"></div>
<div class="abs" style="left:1747.7px;top:800.6px;width:20.4px;height:20.4px;background:#050718;border-radius:50%"></div>
<div class="abs" style="left:1779.2px;top:800.6px;width:20.4px;height:20.4px;background:linear-gradient(90deg,#36373b 50%,#6c6c75 50%);border-radius:50%"></div>
<div class="abs" style="left:1810.7px;top:800.6px;width:20.4px;height:20.4px;background:#36373b;border-radius:50%"></div>
<div class="abs" style="left:1842.2px;top:800.6px;width:20.4px;height:20.4px;background:#070909;border-radius:50%"></div>
<div class="abs" style="left:1873.8px;top:800.6px;width:20.4px;height:20.4px;background:linear-gradient(90deg,#0e4529 50%,#6c6c75 50%);border-radius:50%"></div>
<div class="abs" style="left:1684.6px;top:832.0px;width:20.4px;height:20.4px;background:#0e4529;border-radius:50%"></div>
<div class="abs" style="left:1716.1px;top:832.0px;width:20.4px;height:20.4px;background:#040a07;border-radius:50%"></div>
<div class="abs" style="left:1747.7px;top:832.0px;width:20.4px;height:20.4px;background:linear-gradient(90deg,#721d25 50%,#6c6c75 50%);border-radius:50%"></div>
<div class="abs" style="left:1779.2px;top:832.0px;width:20.4px;height:20.4px;background:#721d25;border-radius:50%"></div>
<div class="abs" style="left:1810.7px;top:832.0px;width:20.4px;height:20.4px;background:#1a0507;border-radius:50%"></div>
<div class="abs" style="left:1842.2px;top:832.0px;width:20.4px;height:20.4px;background:linear-gradient(90deg,#725606 50%,#6c6c75 50%);border-radius:50%"></div>
<div class="abs" style="left:1873.8px;top:832.0px;width:20.4px;height:20.4px;background:#725606;border-radius:50%"></div>
<div class="abs" style="left:1684.6px;top:863.8px;width:20.4px;height:20.4px;background:#181203;border-radius:50%"></div>
<div class="abs" style="left:1716.1px;top:863.8px;width:20.4px;height:20.4px;background:linear-gradient(90deg,#066d7c 50%,#6c6c75 50%);border-radius:50%"></div>
<div class="abs" style="left:1747.7px;top:863.8px;width:20.4px;height:20.4px;background:#066d7c;border-radius:50%"></div>
<div class="abs" style="left:1779.2px;top:863.8px;width:20.4px;height:20.4px;background:#041619;border-radius:50%"></div>
<div class="abs" style="left:1810.7px;top:863.8px;width:20.4px;height:20.4px;background:linear-gradient(90deg,#797979 50%,#666670 50%);border-radius:50%"></div>
<div class="abs" style="left:1842.2px;top:863.8px;width:20.4px;height:20.4px;background:#676767;border-radius:50%"></div>
<div class="abs" style="left:1873.8px;top:863.8px;width:20.4px;height:20.4px;background:#1b1c1e;border-radius:50%"></div>
<div class="abs" style="left:1684.6px;top:895.2px;width:20.4px;height:20.4px;background:linear-gradient(90deg,#1b1c1e 50%,#6c6c75 50%);border-radius:50%"></div>
<div class="abs" style="left:1716.1px;top:895.2px;width:20.4px;height:20.4px;background:#141415;border-radius:50%"></div>
<div class="abs" style="left:1747.7px;top:895.2px;width:20.4px;height:20.4px;background:#0b0c0d;border-radius:50%"></div>
<div class="abs" style="left:1779.2px;top:895.2px;width:20.4px;height:20.4px;background:#676767;border-radius:50%"></div>
<div class="abs" style="left:1810.7px;top:895.2px;width:20.4px;height:20.4px;background:#676767;border-radius:50%"></div>
<div class="abs" style="left:1842.2px;top:895.2px;width:20.4px;height:20.4px;background:#676767;border-radius:50%"></div>
<div class="abs" style="left:1873.8px;top:895.2px;width:20.4px;height:20.4px;background:#676767;border-radius:50%"></div>
<span class="t" style="left:1588.0px;top:973px;font-size:12.3px;color:#5b5a60;letter-spacing:-0.451px;">Back Opacity</span>
<div class="abs" style="left:1664.0px;top:972.3px;width:12.0px;height:12.3px;border:1.200px solid #504f56;border-radius:2px"></div><span class="t" style="left:1668.4px;top:974px;font-size:10.5px;color:#636267;font-weight:bold;font-family:'Liberation Serif',serif;">i</span>
<div class="abs" style="left:1684.5px;top:963.5px;width:3.0px;height:7.0px;background:#0b367a"></div>
<div class="abs" style="left:1683.5px;top:975.5px;width:10.0px;height:10.0px;border:1.200px solid #504f56;border-radius:50%"></div>
<div class="abs" style="left:1685.9px;top:952.0px;width:224.8px;height:61.0px;background:#2e5b48;border-radius:2px"></div>
<div class="abs" style="left:1685.9px;top:952.0px;width:29.7px;height:61.0px;background:#1f4a37;border-radius:2px 0 0 2px"></div>
<svg class="ic" style="left:1695.5px;top:977.5px;stroke:#84947c;stroke-width:1.9;" width="11" height="9" viewBox="0 0 11 9"><path d="M1.200 4.800L4 7.600 9.800 1.400"/></svg>
<span class="t" style="left:1723.8px;top:966px;font-size:15.2px;color:#0f3324;letter-spacing:-0.010px;-webkit-text-stroke:0.400px #0f3324;">App Connect components</span>
<span class="t" style="left:1723.8px;top:985px;font-size:15.2px;color:#0f3324;letter-spacing:0.127px;-webkit-text-stroke:0.400px #0f3324;">updated</span>
</div>
<div class="layer" id="statusbar">
<span class="t" style="left:20.7px;top:1022px;font-size:10.6px;color:#504f56;letter-spacing:-0.244px;">7.7.9</span>
<div class="abs" style="left:68.3px;top:1019.3px;width:13.4px;height:13.4px;background:#42691c;border-radius:50%"></div>
<span class="t" style="left:90.3px;top:1020px;font-size:13.7px;color:#5b5a60;letter-spacing:-0.481px;">Target:</span>
<span class="t" style="left:136.0px;top:1019px;font-size:14.4px;color:#5b5a60;letter-spacing:-0.514px;">Development</span>
<svg class="" style="left:224.5px;top:1024.8px;" width="7" height="4" viewBox="0 0 7 4"><path d="M0 0h7L3.500 4z" fill="#55545b" stroke="none"/></svg>
<span class="t" style="left:244.3px;top:1019px;font-size:14.2px;color:#5b5a60;letter-spacing:-0.611px;">Problems</span>
<span class="t" style="left:313.3px;top:1019px;font-size:14.4px;color:#5b5a60;letter-spacing:-0.104px;">Output</span>
<div class="abs" style="left:376.0px;top:1019.3px;width:13.4px;height:13.4px;background:#42691c;border-radius:50%"></div>
<span class="t" style="left:393.3px;top:1019px;font-size:14.0px;color:#3a3088;letter-spacing:-0.584px;">Web Server</span>
<svg class="ic" style="left:491.5px;top:1019.8px;stroke:#57565c;stroke-width:1.3;" width="13" height="13" viewBox="0 0 13 13"><path d="M6.500 .500v12M.500 6.500h12"/></svg>
<div class="abs" style="left:1489.0px;top:1019.3px;width:14.0px;height:14.0px;border:1.300px solid #352d74;border-radius:1px"></div>
<svg class="ic" style="left:1517.5px;top:1016.8px;stroke:#57565c;stroke-width:1.2;" width="19" height="19" viewBox="0 0 19 19"><path d="M16.300 9.500a7 7 0 1 1-2.300-5.200"/><path d="M16.600 1.500v4h-4"/></svg>
<span class="t" style="left:1552.5px;top:1019px;font-size:13.0px;color:#504f56;font-weight:bold;">···</span>
<svg class="ic" style="left:1581.0px;top:1017.8px;stroke:#57565c;stroke-width:1.0;" width="18" height="18" viewBox="0 0 18 18"><path d="M7 4c.500 3 1.500 4 4.500 4.500-3 .500-4 1.500-4.500 4.500-.500-3-1.500-4-4.500-4.500C5.500 8 6.500 7 7 4z"/><path d="M13.500 1.500c.200 1.200.700 1.700 1.900 1.900-1.200.200-1.700.700-1.900 1.900-.200-1.200-.700-1.700-1.900-1.900 1.200-.200 1.700-.700 1.900-1.900zM13.500 11.500c.200 1.200.700 1.700 1.900 1.900-1.200.200-1.700.700-1.900 1.900-.200-1.200-.700-1.700-1.900-1.900 1.200-.200 1.700-.700 1.900-1.900z"/></svg>
<svg class="ic" style="left:1612.5px;top:1018.3px;stroke:#57565c;stroke-width:1.1;" width="18" height="17" viewBox="0 0 18 17"><rect x="1" y="7.500" width="3.200" height="8.500" rx="0.600"/><path d="M4.200 8.500c2.500-1.500 3.300-3.500 3.500-6 .100-1.200 2.600-1 2.600 1.200 0 1.300-.400 2.300-.900 3.300h5.100c1.300 0 1.700 1.700.700 2.300.800.700.500 1.900-.400 2.200.500.800.100 1.800-.800 2 .300 1-.300 1.700-1.300 1.700H8c-1.500 0-2.300-.500-3.800-1"/></svg>
<svg class="ic" style="left:1644.5px;top:1017.8px;stroke:#57565c;stroke-width:1.1;" width="20" height="18" viewBox="0 0 20 18"><path d="M11 8.500L18.500 1M9.200 7.200l3 3M12.200 10.200c-1 4-4.500 6-10.500 6 1-1.500 1.300-3 1.500-4.500.500-3 3-5.500 6-4.500"/><path d="M4.500 13c1.500.300 3-.300 4-1.500"/></svg>
<svg class="ic" style="left:1694.1px;top:1020.8px;stroke:#57565c;stroke-width:1.3;" width="15" height="12" viewBox="0 0 15 12"><path d="M1.200 6.500L5 10.500 13.800 1.500"/></svg>
<span class="t" style="left:1717.6px;top:1020px;font-size:13.55px;color:#5b5a60;letter-spacing:-0.541px;">System Check</span>
<svg class="ic" style="left:1818.5px;top:1018.8px;stroke:#57565c;stroke-width:1.1;" width="19" height="16" viewBox="0 0 19 16"><path d="M7 14.500L1.800 9.300a1.200 1.200 0 0 1 0-1.700L8.500 1a1.200 1.200 0 0 1 1.700 0l5.300 5.300a1.200 1.200 0 0 1 0 1.700L9 14.500zM5 4.500L12 11.500M7 14.500h10"/></svg>
<svg class="ic" style="left:1852.5px;top:1017.8px;stroke:#57565c;stroke-width:1.1;" width="17" height="18" viewBox="0 0 17 18"><path d="M5.500 5a3 3 0 0 1 6 0M4.500 6.500h8v6a4 4 0 0 1-8 0zM8.500 6.500v10M4.500 9.500H1M4.500 13H1.500M12.500 9.500H16M12.500 13h3M3.500 3.500L5 5.500M13.500 3.500L12 5.500"/></svg>
<svg class="ic" style="left:1892.0px;top:1022.3px;stroke:#57565c;stroke-width:1.3;" width="16" height="9" viewBox="0 0 16 9"><path d="M1.200 7.800L8 1.200l6.800 6.600"/></svg>
</div>
<div class="layer" id="center">
<div class="abs" style="left:403.0px;top:76.0px;width:1179.0px;height:35.0px;background:#0c0b16;border-bottom:1px solid #07060d"></div>
<div class="abs" style="left:403.0px;top:111.0px;width:1179.0px;height:35.0px;background:#0c0b16"></div>
<div class="abs" style="left:403.0px;top:76.0px;width:1.0px;height:70.0px;background:#07060d"></div>
<svg class="ic" style="left:416.8px;top:89.3px;stroke:#57565c;stroke-width:1.200" width="11" height="10" viewBox="0 0 11 10"><path d="M5 1L1 5l4 4M10 1L6 5l4 4"/></svg>
<span class="t" style="left:928.7px;top:87px;font-size:14.0px;color:#312a68;letter-spacing:-0.595px;">Design</span>
<span class="t" style="left:983.3px;top:88px;font-size:13.8px;color:#5b5a60;letter-spacing:-0.765px;">Code</span>
<span class="t" style="left:1027.7px;top:87px;font-size:14.5px;color:#5b5a60;letter-spacing:-0.402px;">Split</span>
<svg class="ic" style="left:1555.3px;top:89.3px;stroke:#57565c;stroke-width:1.200" width="11" height="10" viewBox="0 0 11 10"><path d="M1 1l4 4-4 4M6 1l4 4-4 4"/></svg>
<div class="abs" style="left:402.2px;top:145.3px;width:1179.7px;height:863.7px;border:3.400px solid #8d6ef3;border-radius:10px;background:#1e1a33"></div>
<div class="abs" style="left:435.0px;top:148.4px;width:1133.5px;height:13.1px;background:#000"></div>
<svg style="left:435px;top:149px;overflow:hidden" width="1133.500" height="12.500" viewBox="0 0 1133.500 12.500"><g stroke="#cfcfcf" stroke-width="0.700" fill="none"><line x1="0.50" y1="0" x2="0.50" y2="12.5"/><line x1="4.25" y1="10.5" x2="4.25" y2="12.5"/><line x1="8.00" y1="9" x2="8.00" y2="12.5"/><line x1="11.75" y1="10.5" x2="11.75" y2="12.5"/><line x1="15.50" y1="9" x2="15.50" y2="12.5"/><line x1="19.25" y1="10.5" x2="19.25" y2="12.5"/><line x1="23.00" y1="9" x2="23.00" y2="12.5"/><line x1="26.75" y1="10.5" x2="26.75" y2="12.5"/><line x1="30.50" y1="9" x2="30.50" y2="12.5"/><line x1="34.25" y1="10.5" x2="34.25" y2="12.5"/><line x1="38.00" y1="0" x2="38.00" y2="12.5"/><line x1="41.75" y1="10.5" x2="41.75" y2="12.5"/><line x1="45.50" y1="9" x2="45.50" y2="12.5"/><line x1="49.25" y1="10.5" x2="49.25" y2="12.5"/><line x1="53.00" y1="9" x2="53.00" y2="12.5"/><line x1="56.75" y1="10.5" x2="56.75" y2="12.5"/><line x1="60.50" y1="9" x2="60.50" y2="12.5"/><line x1="64.25" y1="10.5" x2="64.25" y2="12.5"/><line x1="68.00" y1="9" x2="68.00" y2="12.5"/><line x1="71.75" y1="10.5" x2="71.75" y2="12.5"/><line x1="75.50" y1="0" x2="75.50" y2="12.5"/><line x1="79.25" y1="10.5" x2="79.25" y2="12.5"/><line x1="83.00" y1="9" x2="83.00" y2="12.5"/><line x1="86.75" y1="10.5" x2="86.75" y2="12.5"/><line x1="90.50" y1="9" x2="90.50" y2="12.5"/><line x1="94.25" y1="10.5" x2="94.25" y2="12.5"/><line x1="98.00" y1="9" x2="98.00" y2="12.5"/><line x1="101.75" y1="10.5" x2="101.75" y2="12.5"/><line x1="105.50" y1="9" x2="105.50" y2="12.5"/><line x1="109.25" y1="10.5" x2="109.25" y2="12.5"/><line x1="113.00" y1="0" x2="113.00" y2="12.5"/><line x1="116.75" y1="10.5" x2="116.75" y2="12.5"/><line x1="120.50" y1="9" x2="120.50" y2="12.5"/><line x1="124.25" y1="10.5" x2="124.25" y2="12.5"/><line x1="128.00" y1="9" x2="128.00" y2="12.5"/><line x1="131.75" y1="10.5" x2="131.75" y2="12.5"/><line x1="135.50" y1="9" x2="135.50" y2="12.5"/><line x1="139.25" y1="10.5" x2="139.25" y2="12.5"/><line x1="143.00" y1="9" x2="143.00" y2="12.5"/><line x1="146.75" y1="10.5" x2="146.75" y2="12.5"/><line x1="150.50" y1="0" x2="150.50" y2="12.5"/><line x1="154.25" y1="10.5" x2="154.25" y2="12.5"/><line x1="158.00" y1="9" x2="158.00" y2="12.5"/><line x1="161.75" y1="10.5" x2="161.75" y2="12.5"/><line x1="165.50" y1="9" x2="165.50" y2="12.5"/><line x1="169.25" y1="10.5" x2="169.25" y2="12.5"/><line x1="173.00" y1="9" x2="173.00" y2="12.5"/><line x1="176.75" y1="10.5" x2="176.75" y2="12.5"/><line x1="180.50" y1="9" x2="180.50" y2="12.5"/><line x1="184.25" y1="10.5" x2="184.25" y2="12.5"/><line x1="188.00" y1="0" x2="188.00" y2="12.5"/><line x1="191.75" y1="10.5" x2="191.75" y2="12.5"/><line x1="195.50" y1="9" x2="195.50" y2="12.5"/><line x1="199.25" y1="10.5" x2="199.25" y2="12.5"/><line x1="203.00" y1="9" x2="203.00" y2="12.5"/><line x1="206.75" y1="10.5" x2="206.75" y2="12.5"/><line x1="210.50" y1="9" x2="210.50" y2="12.5"/><line x1="214.25" y1="10.5" x2="214.25" y2="12.5"/><line x1="218.00" y1="9" x2="218.00" y2="12.5"/><line x1="221.75" y1="10.5" x2="221.75" y2="12.5"/><line x1="225.50" y1="0" x2="225.50" y2="12.5"/><line x1="229.25" y1="10.5" x2="229.25" y2="12.5"/><line x1="233.00" y1="9" x2="233.00" y2="12.5"/><line x1="236.75" y1="10.5" x2="236.75" y2="12.5"/><line x1="240.50" y1="9" x2="240.50" y2="12.5"/><line x1="244.25" y1="10.5" x2="244.25" y2="12.5"/><line x1="248.00" y1="9" x2="248.00" y2="12.5"/><line x1="251.75" y1="10.5" x2="251.75" y2="12.5"/><line x1="255.50" y1="9" x2="255.50" y2="12.5"/><line x1="259.25" y1="10.5" x2="259.25" y2="12.5"/><line x1="263.00" y1="0" x2="263.00" y2="12.5"/><line x1="266.75" y1="10.5" x2="266.75" y2="12.5"/><line x1="270.50" y1="9" x2="270.50" y2="12.5"/><line x1="274.25" y1="10.5" x2="274.25" y2="12.5"/><line x1="278.00" y1="9" x2="278.00" y2="12.5"/><line x1="281.75" y1="10.5" x2="281.75" y2="12.5"/><line x1="285.50" y1="9" x2="285.50" y2="12.5"/><line x1="289.25" y1="10.5" x2="289.25" y2="12.5"/><line x1="293.00" y1="9" x2="293.00" y2="12.5"/><line x1="296.75" y1="10.5" x2="296.75" y2="12.5"/><line x1="300.50" y1="0" x2="300.50" y2="12.5"/><line x1="304.25" y1="10.5" x2="304.25" y2="12.5"/><line x1="308.00" y1="9" x2="308.00" y2="12.5"/><line x1="311.75" y1="10.5" x2="311.75" y2="12.5"/><line x1="315.50" y1="9" x2="315.50" y2="12.5"/><line x1="319.25" y1="10.5" x2="319.25" y2="12.5"/><line x1="323.00" y1="9" x2="323.00" y2="12.5"/><line x1="326.75" y1="10.5" x2="326.75" y2="12.5"/><line x1="330.50" y1="9" x2="330.50" y2="12.5"/><line x1="334.25" y1="10.5" x2="334.25" y2="12.5"/><line x1="338.00" y1="0" x2="338.00" y2="12.5"/><line x1="341.75" y1="10.5" x2="341.75" y2="12.5"/><line x1="345.50" y1="9" x2="345.50" y2="12.5"/><line x1="349.25" y1="10.5" x2="349.25" y2="12.5"/><line x1="353.00" y1="9" x2="353.00" y2="12.5"/><line x1="356.75" y1="10.5" x2="356.75" y2="12.5"/><line x1="360.50" y1="9" x2="360.50" y2="12.5"/><line x1="364.25" y1="10.5" x2="364.25" y2="12.5"/><line x1="368.00" y1="9" x2="368.00" y2="12.5"/><line x1="371.75" y1="10.5" x2="371.75" y2="12.5"/><line x1="375.50" y1="0" x2="375.50" y2="12.5"/><line x1="379.25" y1="10.5" x2="379.25" y2="12.5"/><line x1="383.00" y1="9" x2="383.00" y2="12.5"/><line x1="386.75" y1="10.5" x2="386.75" y2="12.5"/><line x1="390.50" y1="9" x2="390.50" y2="12.5"/><line x1="394.25" y1="10.5" x2="394.25" y2="12.5"/><line x1="398.00" y1="9" x2="398.00" y2="12.5"/><line x1="401.75" y1="10.5" x2="401.75" y2="12.5"/><line x1="405.50" y1="9" x2="405.50" y2="12.5"/><line x1="409.25" y1="10.5" x2="409.25" y2="12.5"/><line x1="413.00" y1="0" x2="413.00" y2="12.5"/><line x1="416.75" y1="10.5" x2="416.75" y2="12.5"/><line x1="420.50" y1="9" x2="420.50" y2="12.5"/><line x1="424.25" y1="10.5" x2="424.25" y2="12.5"/><line x1="428.00" y1="9" x2="428.00" y2="12.5"/><line x1="431.75" y1="10.5" x2="431.75" y2="12.5"/><line x1="435.50" y1="9" x2="435.50" y2="12.5"/><line x1="439.25" y1="10.5" x2="439.25" y2="12.5"/><line x1="443.00" y1="9" x2="443.00" y2="12.5"/><line x1="446.75" y1="10.5" x2="446.75" y2="12.5"/><line x1="450.50" y1="0" x2="450.50" y2="12.5"/><line x1="454.25" y1="10.5" x2="454.25" y2="12.5"/><line x1="458.00" y1="9" x2="458.00" y2="12.5"/><line x1="461.75" y1="10.5" x2="461.75" y2="12.5"/><line x1="465.50" y1="9" x2="465.50" y2="12.5"/><line x1="469.25" y1="10.5" x2="469.25" y2="12.5"/><line x1="473.00" y1="9" x2="473.00" y2="12.5"/><line x1="476.75" y1="10.5" x2="476.75" y2="12.5"/><line x1="480.50" y1="9" x2="480.50" y2="12.5"/><line x1="484.25" y1="10.5" x2="484.25" y2="12.5"/><line x1="488.00" y1="0" x2="488.00" y2="12.5"/><line x1="491.75" y1="10.5" x2="491.75" y2="12.5"/><line x1="495.50" y1="9" x2="495.50" y2="12.5"/><line x1="499.25" y1="10.5" x2="499.25" y2="12.5"/><line x1="503.00" y1="9" x2="503.00" y2="12.5"/><line x1="506.75" y1="10.5" x2="506.75" y2="12.5"/><line x1="510.50" y1="9" x2="510.50" y2="12.5"/><line x1="514.25" y1="10.5" x2="514.25" y2="12.5"/><line x1="518.00" y1="9" x2="518.00" y2="12.5"/><line x1="521.75" y1="10.5" x2="521.75" y2="12.5"/><line x1="525.50" y1="0" x2="525.50" y2="12.5"/><line x1="529.25" y1="10.5" x2="529.25" y2="12.5"/><line x1="533.00" y1="9" x2="533.00" y2="12.5"/><line x1="536.75" y1="10.5" x2="536.75" y2="12.5"/><line x1="540.50" y1="9" x2="540.50" y2="12.5"/><line x1="544.25" y1="10.5" x2="544.25" y2="12.5"/><line x1="548.00" y1="9" x2="548.00" y2="12.5"/><line x1="551.75" y1="10.5" x2="551.75" y2="12.5"/><line x1="555.50" y1="9" x2="555.50" y2="12.5"/><line x1="559.25" y1="10.5" x2="559.25" y2="12.5"/><line x1="563.00" y1="0" x2="563.00" y2="12.5"/><line x1="566.75" y1="10.5" x2="566.75" y2="12.5"/><line x1="570.50" y1="9" x2="570.50" y2="12.5"/><line x1="574.25" y1="10.5" x2="574.25" y2="12.5"/><line x1="578.00" y1="9" x2="578.00" y2="12.5"/><line x1="581.75" y1="10.5" x2="581.75" y2="12.5"/><line x1="585.50" y1="9" x2="585.50" y2="12.5"/><line x1="589.25" y1="10.5" x2="589.25" y2="12.5"/><line x1="593.00" y1="9" x2="593.00" y2="12.5"/><line x1="596.75" y1="10.5" x2="596.75" y2="12.5"/><line x1="600.50" y1="0" x2="600.50" y2="12.5"/><line x1="604.25" y1="10.5" x2="604.25" y2="12.5"/><line x1="608.00" y1="9" x2="608.00" y2="12.5"/><line x1="611.75" y1="10.5" x2="611.75" y2="12.5"/><line x1="615.50" y1="9" x2="615.50" y2="12.5"/><line x1="619.25" y1="10.5" x2="619.25" y2="12.5"/><line x1="623.00" y1="9" x2="623.00" y2="12.5"/><line x1="626.75" y1="10.5" x2="626.75" y2="12.5"/><line x1="630.50" y1="9" x2="630.50" y2="12.5"/><line x1="634.25" y1="10.5" x2="634.25" y2="12.5"/><line x1="638.00" y1="0" x2="638.00" y2="12.5"/><line x1="641.75" y1="10.5" x2="641.75" y2="12.5"/><line x1="645.50" y1="9" x2="645.50" y2="12.5"/><line x1="649.25" y1="10.5" x2="649.25" y2="12.5"/><line x1="653.00" y1="9" x2="653.00" y2="12.5"/><line x1="656.75" y1="10.5" x2="656.75" y2="12.5"/><line x1="660.50" y1="9" x2="660.50" y2="12.5"/><line x1="664.25" y1="10.5" x2="664.25" y2="12.5"/><line x1="668.00" y1="9" x2="668.00" y2="12.5"/><line x1="671.75" y1="10.5" x2="671.75" y2="12.5"/><line x1="675.50" y1="0" x2="675.50" y2="12.5"/><line x1="679.25" y1="10.5" x2="679.25" y2="12.5"/><line x1="683.00" y1="9" x2="683.00" y2="12.5"/><line x1="686.75" y1="10.5" x2="686.75" y2="12.5"/><line x1="690.50" y1="9" x2="690.50" y2="12.5"/><line x1="694.25" y1="10.5" x2="694.25" y2="12.5"/><line x1="698.00" y1="9" x2="698.00" y2="12.5"/><line x1="701.75" y1="10.5" x2="701.75" y2="12.5"/><line x1="705.50" y1="9" x2="705.50" y2="12.5"/><line x1="709.25" y1="10.5" x2="709.25" y2="12.5"/><line x1="713.00" y1="0" x2="713.00" y2="12.5"/><line x1="716.75" y1="10.5" x2="716.75" y2="12.5"/><line x1="720.50" y1="9" x2="720.50" y2="12.5"/><line x1="724.25" y1="10.5" x2="724.25" y2="12.5"/><line x1="728.00" y1="9" x2="728.00" y2="12.5"/><line x1="731.75" y1="10.5" x2="731.75" y2="12.5"/><line x1="735.50" y1="9" x2="735.50" y2="12.5"/><line x1="739.25" y1="10.5" x2="739.25" y2="12.5"/><line x1="743.00" y1="9" x2="743.00" y2="12.5"/><line x1="746.75" y1="10.5" x2="746.75" y2="12.5"/><line x1="750.50" y1="0" x2="750.50" y2="12.5"/><line x1="754.25" y1="10.5" x2="754.25" y2="12.5"/><line x1="758.00" y1="9" x2="758.00" y2="12.5"/><line x1="761.75" y1="10.5" x2="761.75" y2="12.5"/><line x1="765.50" y1="9" x2="765.50" y2="12.5"/><line x1="769.25" y1="10.5" x2="769.25" y2="12.5"/><line x1="773.00" y1="9" x2="773.00" y2="12.5"/><line x1="776.75" y1="10.5" x2="776.75" y2="12.5"/><line x1="780.50" y1="9" x2="780.50" y2="12.5"/><line x1="784.25" y1="10.5" x2="784.25" y2="12.5"/><line x1="788.00" y1="0" x2="788.00" y2="12.5"/><line x1="791.75" y1="10.5" x2="791.75" y2="12.5"/><line x1="795.50" y1="9" x2="795.50" y2="12.5"/><line x1="799.25" y1="10.5" x2="799.25" y2="12.5"/><line x1="803.00" y1="9" x2="803.00" y2="12.5"/><line x1="806.75" y1="10.5" x2="806.75" y2="12.5"/><line x1="810.50" y1="9" x2="810.50" y2="12.5"/><line x1="814.25" y1="10.5" x2="814.25" y2="12.5"/><line x1="818.00" y1="9" x2="818.00" y2="12.5"/><line x1="821.75" y1="10.5" x2="821.75" y2="12.5"/><line x1="825.50" y1="0" x2="825.50" y2="12.5"/><line x1="829.25" y1="10.5" x2="829.25" y2="12.5"/><line x1="833.00" y1="9" x2="833.00" y2="12.5"/><line x1="836.75" y1="10.5" x2="836.75" y2="12.5"/><line x1="840.50" y1="9" x2="840.50" y2="12.5"/><line x1="844.25" y1="10.5" x2="844.25" y2="12.5"/><line x1="848.00" y1="9" x2="848.00" y2="12.5"/><line x1="851.75" y1="10.5" x2="851.75" y2="12.5"/><line x1="855.50" y1="9" x2="855.50" y2="12.5"/><line x1="859.25" y1="10.5" x2="859.25" y2="12.5"/><line x1="863.00" y1="0" x2="863.00" y2="12.5"/><line x1="866.75" y1="10.5" x2="866.75" y2="12.5"/><line x1="870.50" y1="9" x2="870.50" y2="12.5"/><line x1="874.25" y1="10.5" x2="874.25" y2="12.5"/><line x1="878.00" y1="9" x2="878.00" y2="12.5"/><line x1="881.75" y1="10.5" x2="881.75" y2="12.5"/><line x1="885.50" y1="9" x2="885.50" y2="12.5"/><line x1="889.25" y1="10.5" x2="889.25" y2="12.5"/><line x1="893.00" y1="9" x2="893.00" y2="12.5"/><line x1="896.75" y1="10.5" x2="896.75" y2="12.5"/><line x1="900.50" y1="0" x2="900.50" y2="12.5"/><line x1="904.25" y1="10.5" x2="904.25" y2="12.5"/><line x1="908.00" y1="9" x2="908.00" y2="12.5"/><line x1="911.75" y1="10.5" x2="911.75" y2="12.5"/><line x1="915.50" y1="9" x2="915.50" y2="12.5"/><line x1="919.25" y1="10.5" x2="919.25" y2="12.5"/><line x1="923.00" y1="9" x2="923.00" y2="12.5"/><line x1="926.75" y1="10.5" x2="926.75" y2="12.5"/><line x1="930.50" y1="9" x2="930.50" y2="12.5"/><line x1="934.25" y1="10.5" x2="934.25" y2="12.5"/><line x1="938.00" y1="0" x2="938.00" y2="12.5"/><line x1="941.75" y1="10.5" x2="941.75" y2="12.5"/><line x1="945.50" y1="9" x2="945.50" y2="12.5"/><line x1="949.25" y1="10.5" x2="949.25" y2="12.5"/><line x1="953.00" y1="9" x2="953.00" y2="12.5"/><line x1="956.75" y1="10.5" x2="956.75" y2="12.5"/><line x1="960.50" y1="9" x2="960.50" y2="12.5"/><line x1="964.25" y1="10.5" x2="964.25" y2="12.5"/><line x1="968.00" y1="9" x2="968.00" y2="12.5"/><line x1="971.75" y1="10.5" x2="971.75" y2="12.5"/><line x1="975.50" y1="0" x2="975.50" y2="12.5"/><line x1="979.25" y1="10.5" x2="979.25" y2="12.5"/><line x1="983.00" y1="9" x2="983.00" y2="12.5"/><line x1="986.75" y1="10.5" x2="986.75" y2="12.5"/><line x1="990.50" y1="9" x2="990.50" y2="12.5"/><line x1="994.25" y1="10.5" x2="994.25" y2="12.5"/><line x1="998.00" y1="9" x2="998.00" y2="12.5"/><line x1="1001.75" y1="10.5" x2="1001.75" y2="12.5"/><line x1="1005.50" y1="9" x2="1005.50" y2="12.5"/><line x1="1009.25" y1="10.5" x2="1009.25" y2="12.5"/><line x1="1013.00" y1="0" x2="1013.00" y2="12.5"/><line x1="1016.75" y1="10.5" x2="1016.75" y2="12.5"/><line x1="1020.50" y1="9" x2="1020.50" y2="12.5"/><line x1="1024.25" y1="10.5" x2="1024.25" y2="12.5"/><line x1="1028.00" y1="9" x2="1028.00" y2="12.5"/><line x1="1031.75" y1="10.5" x2="1031.75" y2="12.5"/><line x1="1035.50" y1="9" x2="1035.50" y2="12.5"/><line x1="1039.25" y1="10.5" x2="1039.25" y2="12.5"/><line x1="1043.00" y1="9" x2="1043.00" y2="12.5"/><line x1="1046.75" y1="10.5" x2="1046.75" y2="12.5"/><line x1="1050.50" y1="0" x2="1050.50" y2="12.5"/><line x1="1054.25" y1="10.5" x2="1054.25" y2="12.5"/><line x1="1058.00" y1="9" x2="1058.00" y2="12.5"/><line x1="1061.75" y1="10.5" x2="1061.75" y2="12.5"/><line x1="1065.50" y1="9" x2="1065.50" y2="12.5"/><line x1="1069.25" y1="10.5" x2="1069.25" y2="12.5"/><line x1="1073.00" y1="9" x2="1073.00" y2="12.5"/><line x1="1076.75" y1="10.5" x2="1076.75" y2="12.5"/><line x1="1080.50" y1="9" x2="1080.50" y2="12.5"/><line x1="1084.25" y1="10.5" x2="1084.25" y2="12.5"/><line x1="1088.00" y1="0" x2="1088.00" y2="12.5"/><line x1="1091.75" y1="10.5" x2="1091.75" y2="12.5"/><line x1="1095.50" y1="9" x2="1095.50" y2="12.5"/><line x1="1099.25" y1="10.5" x2="1099.25" y2="12.5"/><line x1="1103.00" y1="9" x2="1103.00" y2="12.5"/><line x1="1106.75" y1="10.5" x2="1106.75" y2="12.5"/><line x1="1110.50" y1="9" x2="1110.50" y2="12.5"/><line x1="1114.25" y1="10.5" x2="1114.25" y2="12.5"/><line x1="1118.00" y1="9" x2="1118.00" y2="12.5"/><line x1="1121.75" y1="10.5" x2="1121.75" y2="12.5"/><line x1="1125.50" y1="0" x2="1125.50" y2="12.5"/><line x1="1129.25" y1="10.5" x2="1129.25" y2="12.5"/><line x1="1133.00" y1="9" x2="1133.00" y2="12.5"/><line x1="0" y1="12.2" x2="1134" y2="12.2" stroke-width="0.6"/></g><g fill="#c4c4c4" font-family="Liberation Sans, sans-serif" font-size="7.6" stroke="none"><text x="2.3" y="6.9">0</text><text x="39.8" y="6.9">50</text><text x="77.3" y="6.9">100</text><text x="114.8" y="6.9">150</text><text x="152.3" y="6.9">200</text><text x="189.8" y="6.9">250</text><text x="227.3" y="6.9">300</text><text x="264.8" y="6.9">350</text><text x="302.3" y="6.9">400</text><text x="339.8" y="6.9">450</text><text x="377.3" y="6.9">500</text><text x="414.8" y="6.9">550</text><text x="452.3" y="6.9">600</text><text x="489.8" y="6.9">650</text><text x="527.3" y="6.9">700</text><text x="564.8" y="6.9">750</text><text x="602.3" y="6.9">800</text><text x="639.8" y="6.9">850</text><text x="677.3" y="6.9">900</text><text x="714.8" y="6.9">950</text><text x="752.3" y="6.9">1000</text><text x="789.8" y="6.9">1050</text><text x="827.3" y="6.9">1100</text><text x="864.8" y="6.9">1150</text><text x="902.3" y="6.9">1200</text><text x="939.8" y="6.9">1250</text><text x="977.3" y="6.9">1300</text><text x="1014.8" y="6.9">1350</text><text x="1052.3" y="6.9">1400</text><text x="1089.8" y="6.9">1450</text><text x="1127.3" y="6.9">1500</text></g></svg>
<div class="abs" style="left:435.0px;top:161.5px;width:1133.5px;height:821.5px;background:#212529"></div>
<span class="t" style="left:479.5px;top:189px;font-size:26.6px;color:#dee2e6;letter-spacing:0.071px;-webkit-text-stroke:0.72px #dee2e6;">App Connect Counter</span>
<span class="t" style="left:479.5px;top:225px;font-size:14.8px;color:#b4b9be;letter-spacing:0.078px;">A tiny fixture to demonstrate reactivity: update a Variable and watch the UI change.</span>
<div class="abs" style="left:479.0px;top:257.0px;width:1047.0px;height:1.0px;background:#3b4045"></div>
<div class="abs" style="left:479.0px;top:280.2px;width:601.0px;height:247.3px;border:1px solid #394453;border-radius:6px;background:linear-gradient(125deg,#23364f 0%,#2a3a50 38%,#323c49 68%,#3a4046 100%)"></div>
<div class="abs" style="left:525.4px;top:330.6px;width:95.6px;height:17.4px;background:#32363b;border-radius:4px"></div>
<span class="t" style="left:532.0px;top:335px;font-size:11.2px;color:#fff;letter-spacing:-0.097px;font-weight:bold;">Reactive starter</span>
<span class="h3" style="position:absolute;left:0;top:0"><span class="t" style="left:525.0px;top:360px;font-size:21.2px;color:#f1f3f5;letter-spacing:0.266px;-webkit-text-stroke:0.57px #f1f3f5;">Click</span><span class="t" style="left:579.4px;top:361px;font-size:21.8px;color:#f1f3f5;font-family:'DejaVu Sans',sans-serif;white-space:pre;margin-left:-6.900px;"> → </span><span class="t" style="left:605.1px;top:360px;font-size:21.2px;color:#f1f3f5;letter-spacing:0.987px;-webkit-text-stroke:0.57px #f1f3f5;">action</span><span class="t" style="left:674.7px;top:361px;font-size:21.8px;color:#f1f3f5;font-family:'DejaVu Sans',sans-serif;white-space:pre;margin-left:-6.900px;"> → </span><span class="t" style="left:700.0px;top:360px;font-size:21.2px;color:#f1f3f5;letter-spacing:0.461px;-webkit-text-stroke:0.57px #f1f3f5;">state</span><span class="t" style="left:755.2px;top:361px;font-size:21.8px;color:#f1f3f5;font-family:'DejaVu Sans',sans-serif;white-space:pre;margin-left:-6.900px;"> → </span><span class="t" style="left:781.7px;top:360px;font-size:21.2px;color:#f1f3f5;letter-spacing:-1.200px;-webkit-text-stroke:0.57px #f1f3f5;">UI</span></span>
<span class="t" style="left:525.2px;top:395px;font-size:15.0px;color:#e9ecef;letter-spacing:-0.033px;">The button runs an App Connect action that updates a Variable.</span>
<div class="abs" style="left:525.2px;top:428.6px;width:49.2px;height:19.0px;background:#32363b;border-radius:4px"></div>
<span class="t" style="left:531.9px;top:432px;font-size:11.6px;color:#fff;letter-spacing:-0.451px;font-weight:bold;">Count:</span>
<div class="abs" style="left:582.0px;top:428.6px;width:21.0px;height:19.0px;background:#6c757d;border-radius:4px"></div>
<span class="t" style="left:589.2px;top:432px;font-size:11.6px;color:#fff;font-weight:bold;">0</span>
<span class="t" style="left:525.2px;top:466px;font-size:13.2px;color:#a4abb3;letter-spacing:-0.151px;">Formatted example:</span>
<span class="t" style="left:644.0px;top:466px;font-size:13.2px;color:#ced4da;letter-spacing:-0.256px;font-weight:bold;">$0.00</span>
<div class="abs" style="left:1098.3px;top:276.7px;width:430.2px;height:255.3px;border:2px solid #8d6ef3;border-radius:5px"></div>
<div class="abs" style="left:1102.4px;top:280.5px;width:422.0px;height:247.3px;border:1.700px solid #7f68de;border-radius:4px"></div>
<span class="t" style="left:1118.7px;top:300px;font-size:18.4px;color:#f1f3f5;letter-spacing:0.360px;-webkit-text-stroke:0.5px #f1f3f5;">Actions</span>
<span class="t" style="left:1118.4px;top:332px;font-size:14.8px;color:#c4c8cc;letter-spacing:0.058px;">This button increments the counter Variable.</span>
<div class="abs" style="left:1118.0px;top:364.0px;width:91.2px;height:34.8px;background:#0d6efd;border-radius:5px"></div>
<span class="t" style="left:1130.4px;top:375px;font-size:15.2px;color:#fff;letter-spacing:-0.148px;-webkit-text-stroke:0.41px #fff;">Increment</span>
<div class="abs" style="left:1220.3px;top:364.0px;width:60.4px;height:34.8px;border:1px solid #5b6168;border-radius:5px"></div>
<span class="t" style="left:1233.0px;top:376px;font-size:14.3px;color:#7f868d;letter-spacing:-0.639px;">Reset</span>
<div class="abs" style="left:1106.0px;top:250.4px;width:55.7px;height:25.8px;background:#000;border-radius:3px"></div>
<svg class="ic" style="left:1114.5px;top:257.6px;stroke:#fff;stroke-width:1.800" width="8" height="12" viewBox="0 0 8 12"><path d="M6.300 1.200 L1.600 6 L6.300 10.800"/></svg>
<span class="t" style="left:1128.8px;top:259px;font-size:12.15px;color:#fff;letter-spacing:-0.611px;">Card</span>
<div class="abs" style="left:1302.8px;top:246.8px;width:22.4px;height:22.4px;background:#8d6ef3;border-radius:50%;box-shadow:0 1px 3px rgba(0,0,0,.5)"></div>
<svg class="ic" style="left:1308.0px;top:252.0px;stroke:#fff;stroke-width:2" width="12" height="12" viewBox="0 0 12 12"><path d="M6 1.5V10.5M1.5 6H10.5"/></svg>
<div class="abs" style="left:1302.8px;top:539.3px;width:22.4px;height:22.4px;background:#8d6ef3;border-radius:50%;box-shadow:0 1px 3px rgba(0,0,0,.5)"></div>
<svg class="ic" style="left:1308.0px;top:544.5px;stroke:#fff;stroke-width:2" width="12" height="12" viewBox="0 0 12 12"><path d="M6 1.5V10.5M1.5 6H10.5"/></svg>
<div class="abs" style="left:937.0px;top:983.0px;width:632.0px;height:1.0px;background:#141220"></div>
<div class="abs" style="left:1463.5px;top:988.5px;width:110.0px;height:15.5px;background:#3c2f70;border:1.2px solid #8468e0;border-radius:3px"></div>
<span class="t" style="left:945.6px;top:990px;font-size:13.7px;color:#f2f2f4;letter-spacing:0.010px;">App</span>
<span class="t" style="left:973.6px;top:990px;font-size:13.7px;color:#6db4c9;letter-spacing:0.051px;">app-connect-counter</span>
<span class="t" style="left:1104.5px;top:990px;font-size:13.7px;color:#f2f2f4;">&gt;</span>
<span class="t" style="left:1115.4px;top:990px;font-size:13.7px;color:#f2f2f4;letter-spacing:-0.176px;">Container</span>
<span class="t" style="left:1177.3px;top:990px;font-size:13.7px;color:#6db4c9;letter-spacing:-0.330px;">counterPage</span>
<span class="t" style="left:1256.0px;top:990px;font-size:13.7px;color:#f2f2f4;">&gt;</span>
<span class="t" style="left:1266.9px;top:990px;font-size:13.7px;color:#f2f2f4;letter-spacing:-0.333px;">Section</span>
<span class="t" style="left:1314.4px;top:990px;font-size:13.7px;color:#6db4c9;letter-spacing:-0.080px;">counterHero</span>
<span class="t" style="left:1393.3px;top:990px;font-size:13.7px;color:#f2f2f4;">&gt;</span>
<span class="t" style="left:1404.4px;top:990px;font-size:13.7px;color:#f2f2f4;letter-spacing:-0.162px;">Column</span>
<span class="t" style="left:1455.0px;top:990px;font-size:13.7px;color:#f2f2f4;">&gt;</span>
<span class="t" style="left:1466.0px;top:990px;font-size:13.7px;color:#f2f2f4;letter-spacing:-0.565px;">Card</span>
<span class="t" style="left:1497.5px;top:990px;font-size:13.7px;color:#6db4c9;letter-spacing:-0.210px;">counterCard</span>
<div class="abs" style="left:1572.2px;top:560.0px;width:1.0px;height:11.0px;background:#8d8aa0"></div>
<div class="abs" style="left:1575.0px;top:560.0px;width:1.0px;height:11.0px;background:#8d8aa0"></div>
<svg class="ic" style="left:412.0px;top:154.5px;stroke:#8d6ef3;stroke-width:1.400" width="19" height="19" viewBox="0 0 19 19"><path d="M8.500 3.500H3.500A2 2 0 0 0 1.500 5.500v10a2 2 0 0 0 2 2h10a2 2 0 0 0 2-2v-5"/><path d="M14.800 1.800a1.700 1.700 0 0 1 2.400 2.400L9.500 11.900l-3.200.800.800-3.200z"/></svg>
<svg class="ic" style="left:410.0px;top:184.0px;stroke:#e9e9ee;stroke-width:1.300" width="24" height="20" viewBox="0 0 24 20"><path d="M2.500 11.500V9.500H9V11.500M5.750 9.500V17M4 17H7.500"/><path d="M9.800 6.200V3.300H21.300V6.200M15.550 3.300V17M13 17H18.100"/></svg>
<svg class="ic" style="left:414.0px;top:213.3px;stroke:#e9e9ee;stroke-width:1.250" width="16" height="22" viewBox="0 0 16 22"><circle cx="7.700" cy="4.300" r="2.200"/><path d="M4.800 8.800H9.600V16.300H11.300V19.500H4.300V16.300H6.300V11.600H4.800z"/></svg>
<svg class="ic" style="left:413.0px;top:243.8px;stroke:#e9e9ee;stroke-width:1.200" width="18" height="21" viewBox="0 0 18 21"><circle cx="9" cy="4.300" r="2.200"/><path d="M3.300 5.600C2.600 6.300 2.800 7 3.400 7.600L6.300 10.500V18.200C6.300 19.400 8.500 19.400 8.500 18.200V14.200H9.500V18.200C9.500 19.400 11.700 19.400 11.700 18.200V10.500L14.600 7.600C15.200 7 15.400 6.300 14.700 5.600C14 4.900 13.300 5.200 12.800 5.700L10.600 8H7.400L5.200 5.700C4.700 5.200 4 4.900 3.300 5.600z"/></svg>
<svg class="ic" style="left:411.5px;top:277.0px;stroke:#e9e9ee;stroke-width:1.300" width="20" height="14" viewBox="0 0 20 14"><path d="M1 7C3.300 3.200 6.300 1.200 10 1.200S16.700 3.200 19 7C16.700 10.800 13.700 12.800 10 12.800S3.300 10.800 1 7z"/><circle cx="10" cy="7" r="3.400"/><circle cx="10" cy="7" r="1.500" fill="#e9e9ee" stroke="none"/><circle cx="10.900" cy="6.100" r="0.700" fill="#1d1931" stroke="none"/></svg>
<svg class="" style="left:412.7px;top:913.9px;" width="17" height="16" viewBox="0 0 17 16"><g fill="#dcd9d6" stroke="none"><rect x="1.0" y="1" width="4.500" height="4" rx="0.600"/><rect x="1.0" y="6" width="4.500" height="4" rx="0.600"/><rect x="1.0" y="11" width="4.500" height="4" rx="0.600"/><rect x="6.5" y="1" width="4.500" height="4" rx="0.600"/><rect x="6.5" y="6" width="4.500" height="4" rx="0.600"/><rect x="6.5" y="11" width="4.500" height="4" rx="0.600"/><rect x="12.0" y="1" width="4.500" height="4" rx="0.600"/><rect x="12.0" y="6" width="4.500" height="4" rx="0.600"/><rect x="12.0" y="11" width="4.500" height="4" rx="0.600"/></g></svg>
<svg class="ic" style="left:411.2px;top:948.2px;stroke:#8d6ef3;stroke-width:1.1;" width="20" height="8" viewBox="0 0 20 8"><path d="M19 7H1V1h18"/><path d="M4 7V4.500M6.500 7V5.200M9 7V4.500M11.500 7V5.200M14 7V4.500M16.500 7V5.200" stroke-width="0.900"/></svg>
<div class="abs" style="left:416.1px;top:970.9px;width:6.4px;height:6.4px;background:#13951a;border-radius:50%"></div>
<svg class="ic" style="left:413.5px;top:120.5px;stroke:#1f1e29;stroke-width:1.2;" width="17" height="17" viewBox="0 0 17 17"><path d="M2.500 8.500a6 6 0 1 0 2-4.500"/><path d="M2.200 1.500v3.500h3.500"/></svg>
<svg class="ic" style="left:445.5px;top:120.5px;stroke:#1f1e29;stroke-width:1.2;" width="17" height="17" viewBox="0 0 17 17"><path d="M14.500 8.500a6 6 0 1 1-2-4.500"/><path d="M14.800 1.500v3.500h-3.500"/></svg>
<svg class="ic" style="left:482.2px;top:121.0px;stroke:#57565c;stroke-width:1.2;" width="19" height="16" viewBox="0 0 19 16"><path d="M1.500 4.500h3.500l1.500-2.500h6l1.500 2.500h3.500v10h-16z"/><circle cx="9.500" cy="9" r="3"/></svg>
<svg class="" style="left:523.0px;top:120.0px;" width="16" height="18" viewBox="0 0 16 18"><path d="M11 1a8.500 8.500 0 1 0 4.500 13A7 7 0 0 1 11 1z" fill="#4a3d8c" stroke="none"/></svg>
<svg class="ic" style="left:886.2px;top:120.5px;stroke:#57565c;stroke-width:1.2;" width="11" height="17" viewBox="0 0 11 17"><rect x="1" y="1" width="9" height="15" rx="1.500"/><circle cx="5.500" cy="13.200" r="0.500"/></svg>
<svg class="ic" style="left:914.3px;top:122.5px;stroke:#57565c;stroke-width:1.2;" width="18" height="13" viewBox="0 0 18 13"><rect x="1" y="1" width="16" height="11" rx="1.500"/></svg>
<svg class="ic" style="left:946.8px;top:120.5px;stroke:#57565c;stroke-width:1.2;" width="15" height="17" viewBox="0 0 15 17"><rect x="1" y="1" width="13" height="15" rx="1.500"/><circle cx="7.500" cy="13" r="0.500"/></svg>
<svg class="ic" style="left:977.8px;top:121.5px;stroke:#57565c;stroke-width:1.2;" width="21" height="15" viewBox="0 0 21 15"><path d="M3.500 10.500V2.500a1 1 0 0 1 1-1h12a1 1 0 0 1 1 1v8M1 10.500h19v1.500a1.500 1.500 0 0 1-1.500 1.500h-16A1.500 1.500 0 0 1 1 12z"/></svg>
<svg class="ic" style="left:1012.3px;top:121.0px;stroke:#57565c;stroke-width:1.2;" width="20" height="16" viewBox="0 0 20 16"><rect x="1" y="1" width="18" height="10.500" rx="1.200"/><path d="M8 11.500l-1 3.500h6l-1-3.500M5.500 15h9"/></svg>
<svg class="ic" style="left:1046.8px;top:121.0px;stroke:#57565c;stroke-width:1.2;" width="21" height="16" viewBox="0 0 21 16"><rect x="1" y="1" width="19" height="11.500" rx="1.200"/><path d="M5.500 15h10"/></svg>
<svg class="ic" style="left:1082.5px;top:120.5px;stroke:#312a68;stroke-width:1.2;" width="17" height="17" viewBox="0 0 17 17"><path d="M8.500 1v15M1 8.500h15M6.300 3.200L8.500 1l2.200 2.200M6.300 13.800L8.500 16l2.200-2.200M3.200 6.300L1 8.500l2.200 2.200M13.800 6.300L16 8.500l-2.200 2.200"/></svg>
<svg class="ic" style="left:1419.3px;top:120.0px;stroke:#312a68;stroke-width:1.2;" width="12" height="18" viewBox="0 0 12 18"><path d="M4 1h5L7 7h3.500L4.500 17l1.200-7.500H2z"/></svg>
<svg class="ic" style="left:1447.7px;top:120.5px;stroke:#57565c;stroke-width:1.1;" width="20" height="17" viewBox="0 0 20 17"><path d="M8 4.500H3a1.500 1.500 0 0 0-1.500 1.500v8A1.500 1.500 0 0 0 3 15.500h9a1.500 1.500 0 0 0 1.500-1.500v-2.500"/><path d="M12.500 1l6 5-6 5V8c-3.500 0-6 1-7.500 3.500C5.500 7 8 4.500 12.500 4z"/></svg>
<svg class="ic" style="left:1482.7px;top:121.0px;stroke:#57565c;stroke-width:1.0;" width="16" height="16" viewBox="0 0 16 16"><rect x="1" y="1" width="5.500" height="5.500"/><rect x="9.500" y="1" width="5.500" height="5.500"/><rect x="1" y="9.500" width="5.500" height="5.500"/><path d="M3.200 3.200h1.100v1.100H3.200zM11.700 3.200h1.100v1.100h-1.100zM3.200 11.700h1.100v1.100H3.200zM9.500 9.500h2v2h-2zM13 9.500h2M9.500 13v2h2M13 12.500h2v2.500"/></svg>
<svg class="ic" style="left:1519.5px;top:120.5px;stroke:#57565c;stroke-width:1.2;" width="19" height="17" viewBox="0 0 19 17"><path d="M2 7.500A7.500 6.500 0 0 1 15.500 4.500M17 9.500A7.500 6.500 0 0 1 3.500 12.500"/><path d="M16 1v4h-4M3 16v-4h4"/></svg>
<svg class="ic" style="left:1552.0px;top:120.3px;stroke:#57565c;stroke-width:1.25;" width="17.4" height="17.4" viewBox="0 0 17.4 17.4"><circle cx="8.7" cy="8.7" r="7.7"/><path d="M6.20 6.80a2.600 2.500 0 1 1 3.900 2.200c-1 .600-1.400 1-1.400 2.100" stroke-width="1.500"/><circle cx="8.7" cy="13.00" r="0.950" fill="#57565c" stroke="none"/></svg>
</div>
</body>
</html>
